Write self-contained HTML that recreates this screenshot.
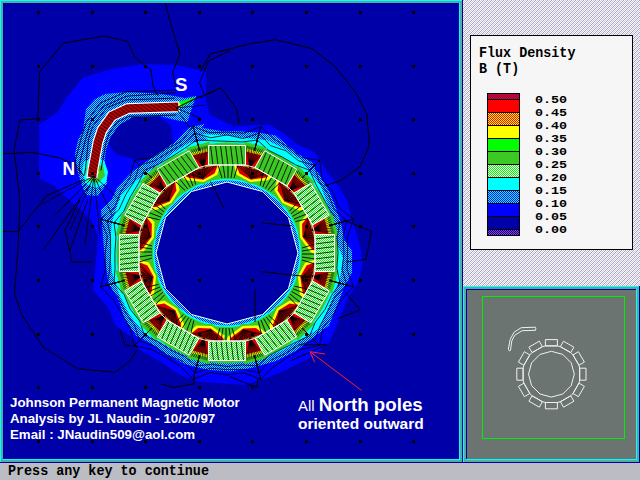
<!DOCTYPE html>
<html><head><meta charset="utf-8">
<style>
html,body{margin:0;padding:0;width:640px;height:480px;overflow:hidden;background:#c0c0c8}
svg{position:absolute;left:0;top:0;display:block}
.mono{font-family:"Liberation Mono",monospace;font-weight:bold}
.sans{font-family:"Liberation Sans",sans-serif;font-weight:bold}
</style></head><body>
<svg width="640" height="480" viewBox="0 0 640 480" shape-rendering="crispEdges">
<defs>
<pattern id="hatch" width="4" height="4" patternUnits="userSpaceOnUse">
<rect width="4" height="4" fill="#f8f8f8"/>
<rect x="1" y="0" width="1" height="1" fill="#c8d0d4"/><rect x="3" y="0" width="1" height="1" fill="#ac9cd0"/>
<rect x="0" y="1" width="1" height="1" fill="#c8d0d4"/><rect x="2" y="1" width="1" height="1" fill="#ac9cd0"/>
<rect x="1" y="2" width="1" height="1" fill="#ac9cd0"/><rect x="3" y="2" width="1" height="1" fill="#c8d0d4"/>
<rect x="0" y="3" width="1" height="1" fill="#ac9cd0"/><rect x="2" y="3" width="1" height="1" fill="#c8d0d4"/>
</pattern>
<pattern id="dCrim" width="2" height="2" patternUnits="userSpaceOnUse"><rect width="2" height="2" fill="#ff0000"/><rect x="1" y="0" width="1" height="1" fill="#701070"/><rect x="0" y="1" width="1" height="1" fill="#701070"/></pattern>
<pattern id="dOrg" width="2" height="2" patternUnits="userSpaceOnUse"><rect width="2" height="2" fill="#ff0000"/><rect x="1" y="0" width="1" height="1" fill="#ffff00"/><rect x="0" y="1" width="1" height="1" fill="#ffff00"/></pattern>
<pattern id="dMg" width="2" height="2" patternUnits="userSpaceOnUse"><rect width="2" height="2" fill="#00f000"/><rect x="1" y="0" width="1" height="1" fill="#78a048"/><rect x="0" y="1" width="1" height="1" fill="#78a048"/></pattern>
<pattern id="dLg" width="2" height="2" patternUnits="userSpaceOnUse"><rect width="2" height="2" fill="#00ff00"/><rect x="1" y="0" width="1" height="1" fill="#ffffff"/><rect x="0" y="1" width="1" height="1" fill="#ffffff"/></pattern>
<pattern id="dBl" width="2" height="2" patternUnits="userSpaceOnUse"><rect width="2" height="2" fill="#0000ff"/><rect x="1" y="0" width="1" height="1" fill="#00ffff"/><rect x="0" y="1" width="1" height="1" fill="#00ffff"/></pattern>
<pattern id="dPur" width="2" height="2" patternUnits="userSpaceOnUse"><rect width="2" height="2" fill="#0000a8"/><rect x="1" y="0" width="1" height="1" fill="#a040b0"/><rect x="0" y="1" width="1" height="1" fill="#a040b0"/></pattern>
</defs>
<!-- status bar -->
<rect x="0" y="463" width="640" height="17" fill="#bcbcc4"/>
<!-- right panel hatch -->
<rect x="463" y="0" width="177" height="286" fill="url(#hatch)"/>
<!-- main frame -->
<rect x="0" y="0" width="463" height="463" fill="#52aca0"/>
<rect x="0" y="0" width="462" height="1" fill="#00ffff"/>
<rect x="0" y="0" width="1" height="462" fill="#00ffff"/>
<rect x="3" y="3" width="456" height="456" fill="#0000a8"/>
<rect x="459" y="3" width="1" height="457" fill="#00ffff"/>
<rect x="3" y="459" width="457" height="1" fill="#00ffff"/>
<rect x="462" y="0" width="1" height="463" fill="#0000a0"/>
<rect x="0" y="462" width="463" height="1" fill="#0000a0"/>
<pattern id="arcHatch" width="3" height="3" patternUnits="userSpaceOnUse" patternTransform="rotate(35)"><rect width="3" height="3" fill="#700000"/><rect width="3" height="1" fill="#d00808"/></pattern>
<clipPath id="mainclip"><rect x="3" y="3" width="456" height="456"/></clipPath>
<g clip-path="url(#mainclip)" shape-rendering="auto">
<polygon points="82.5,78.0 90.0,75.2 112.0,69.0 142.8,64.0 175.3,65.0 199.7,70.0 206.0,72.0 206.0,100.0 210.0,115.0 234.5,126.7 252.0,125.0 270.0,125.0 285.0,134.0 296.8,144.5 314.6,152.0 326.5,171.0 338.4,186.0 347.3,201.0 351.7,218.7 355.6,230.0 361.0,251.0 362.7,265.4 357.4,283.0 346.8,300.8 339.7,318.5 329.0,343.0 311.4,357.4 286.6,369.8 265.4,378.6 244.0,385.0 220.0,383.0 200.0,382.0 180.0,375.0 161.0,362.0 140.0,350.0 133.0,338.0 115.4,325.5 108.3,307.8 93.0,290.0 95.0,272.0 97.0,250.0 98.0,236.0 91.0,220.0 79.6,208.8 65.9,197.3 54.4,186.0 40.6,179.0 38.8,175.0 39.5,140.0 38.8,125.0 57.5,112.5 66.9,96.9" fill="#0000ff"/>
<polygon points="104.0,122.0 110.0,115.0 130.0,114.0 157.5,116.0 171.0,126.0 173.0,143.0 164.0,157.0 140.0,161.0 116.0,154.0 106.0,141.0" fill="#0000a8"/>
<polygon points="83.0,130.6 86.0,108.8 95.0,99.0 105.0,94.0 127.0,92.0 158.0,93.5 173.8,96.0 185.0,98.0 196.0,96.0 192.0,108.0 187.5,122.0 175.0,120.0 160.0,116.0 133.0,117.0 119.0,125.0 110.0,138.0 106.0,150.0 104.0,165.0 107.0,174.4 107.0,183.6 98.0,196.0 86.5,195.0 82.0,186.0 77.3,169.8 75.0,153.8 78.0,140.0" fill="url(#dBl)"/>
<polygon points="84.0,162.0 92.0,158.0 104.0,160.0 108.0,172.0 106.0,183.0 96.0,188.0 86.0,184.0 82.0,172.0" fill="#00ffff"/>
<polygon points="86.0,168.0 93.0,164.0 103.0,166.0 105.0,176.0 98.0,183.0 89.0,181.0" fill="url(#dMg)"/>
<polygon points="88.0,170.0 94.0,168.0 99.0,172.0 96.0,178.0 90.0,177.0" fill="#ffff00"/>
<polygon points="201.9,128.0 204.8,128.2 222.6,131.2 237.5,131.2 258.0,132.6 276.0,135.6 288.0,146.0 299.8,155.0 311.7,162.3 320.6,177.0 329.5,192.0 335.4,206.8 341.3,224.6 344.3,240.0 352.0,251.0 352.0,272.5 343.2,290.0 336.0,307.8 329.0,325.5 315.0,336.0 297.0,350.3 276.0,361.0 251.2,368.0 230.0,371.5 207.4,369.8 186.0,364.5 165.0,353.8 150.8,343.2 136.6,336.0 124.2,318.5 119.0,300.8 108.3,283.0 104.8,258.3 103.0,237.0 101.0,210.0 111.7,199.6 117.5,187.0 133.0,171.0 155.0,155.6 173.8,143.0 189.0,127.5 205.0,124.0" fill="url(#dBl)"/>
<polygon points="201.9,134.0 228.6,135.6 249.3,138.6 267.0,140.0 285.0,149.0 299.8,159.3 311.7,174.0 320.6,186.0 326.5,201.0 332.4,218.7 335.4,240.0 343.2,258.3 339.7,279.5 332.6,297.2 325.5,315.0 318.5,329.0 300.8,339.7 283.0,350.3 265.4,357.4 244.0,361.0 230.0,362.7 203.8,359.2 182.6,353.8 161.4,343.2 143.7,332.6 129.5,315.0 119.0,293.7 112.0,272.5 110.0,251.0 111.7,222.5 120.6,196.0 136.0,180.6 158.0,165.0 173.8,152.5 189.0,143.0 208.0,140.0" fill="#00ffff"/>
<path d="M337.5,253.0 337.1,243.4 335.8,233.8 333.7,224.4 330.8,215.2 327.1,206.3 322.7,197.8 317.5,189.6 311.6,182.0 305.1,174.9 298.0,168.4 290.4,162.5 282.2,157.3 273.7,152.9 264.8,149.2 255.6,146.3 246.2,144.2 236.6,142.9 227.0,142.5 217.4,142.9 207.8,144.2 198.4,146.3 189.2,149.2 180.3,152.9 171.8,157.3 163.6,162.5 156.0,168.4 148.9,174.9 142.4,182.0 136.5,189.6 131.3,197.8 126.9,206.3 123.2,215.2 120.3,224.4 118.2,233.8 116.9,243.4 116.5,253.0 116.9,262.6 118.2,272.2 120.3,281.6 123.2,290.8 126.9,299.7 131.3,308.2 136.5,316.4 142.4,324.0 148.9,331.1 156.0,337.6 163.6,343.5 171.7,348.7 180.3,353.1 189.2,356.8 198.4,359.7 207.8,361.8 217.4,363.1 227.0,363.5 236.6,363.1 246.2,361.8 255.6,359.7 264.8,356.8 273.7,353.1 282.2,348.7 290.4,343.5 298.0,337.6 305.1,331.1 311.6,324.0 317.5,316.4 322.7,308.3 327.1,299.7 330.8,290.8 333.7,281.6 335.8,272.2 337.1,262.6Z M288.5,288.5 262.5,314.5 227.0,324.0 191.5,314.5 165.5,288.5 156.0,253.0 165.5,217.5 191.5,191.5 227.0,182.0 262.5,191.5 288.5,217.5 298.0,253.0Z" fill="url(#dMg)" fill-rule="evenodd"/>
<path d="M301.0,253.0 300.7,246.6 299.9,240.2 298.5,233.8 296.5,227.7 294.1,221.7 291.1,216.0 287.6,210.6 283.7,205.4 279.3,200.7 274.6,196.3 269.4,192.4 264.0,188.9 258.3,185.9 252.3,183.5 246.2,181.5 239.8,180.1 233.4,179.3 227.0,179.0 220.6,179.3 214.2,180.1 207.8,181.5 201.7,183.5 195.7,185.9 190.0,188.9 184.6,192.4 179.4,196.3 174.7,200.7 170.3,205.4 166.4,210.6 162.9,216.0 159.9,221.7 157.5,227.7 155.5,233.8 154.1,240.2 153.3,246.6 153.0,253.0 153.3,259.4 154.1,265.8 155.5,272.2 157.5,278.3 159.9,284.3 162.9,290.0 166.4,295.4 170.3,300.6 174.7,305.3 179.4,309.7 184.6,313.6 190.0,317.1 195.7,320.1 201.7,322.5 207.8,324.5 214.2,325.9 220.6,326.7 227.0,327.0 233.4,326.7 239.8,325.9 246.2,324.5 252.3,322.5 258.3,320.1 264.0,317.1 269.4,313.6 274.6,309.7 279.3,305.3 283.7,300.6 287.6,295.4 291.1,290.0 294.1,284.3 296.5,278.3 298.5,272.2 299.9,265.8 300.7,259.4Z M288.5,288.5 262.5,314.5 227.0,324.0 191.5,314.5 165.5,288.5 156.0,253.0 165.5,217.5 191.5,191.5 227.0,182.0 262.5,191.5 288.5,217.5 298.0,253.0Z" fill="#00ffff" fill-rule="evenodd"/>
<path d="M299.5,253.0 299.2,246.7 298.4,240.4 297.0,234.2 295.1,228.2 292.7,222.4 289.8,216.8 286.4,211.4 282.5,206.4 278.3,201.7 273.6,197.5 268.6,193.6 263.2,190.2 257.6,187.3 251.8,184.9 245.8,183.0 239.6,181.6 233.3,180.8 227.0,180.5 220.7,180.8 214.4,181.6 208.2,183.0 202.2,184.9 196.4,187.3 190.8,190.2 185.4,193.6 180.4,197.5 175.7,201.7 171.5,206.4 167.6,211.4 164.2,216.8 161.3,222.4 158.9,228.2 157.0,234.2 155.6,240.4 154.8,246.7 154.5,253.0 154.8,259.3 155.6,265.6 157.0,271.8 158.9,277.8 161.3,283.6 164.2,289.2 167.6,294.6 171.5,299.6 175.7,304.3 180.4,308.5 185.4,312.4 190.7,315.8 196.4,318.7 202.2,321.1 208.2,323.0 214.4,324.4 220.7,325.2 227.0,325.5 233.3,325.2 239.6,324.4 245.8,323.0 251.8,321.1 257.6,318.7 263.2,315.8 268.6,312.4 273.6,308.5 278.3,304.3 282.5,299.6 286.4,294.6 289.8,289.3 292.7,283.6 295.1,277.8 297.0,271.8 298.4,265.6 299.2,259.3Z M288.5,288.5 262.5,314.5 227.0,324.0 191.5,314.5 165.5,288.5 156.0,253.0 165.5,217.5 191.5,191.5 227.0,182.0 262.5,191.5 288.5,217.5 298.0,253.0Z" fill="url(#dBl)" fill-rule="evenodd"/>
<polygon points="298.0,253.0 288.5,217.5 262.5,191.5 227.0,182.0 191.5,191.5 165.5,217.5 156.0,253.0 165.5,288.5 191.5,314.5 227.0,324.0 262.5,314.5 288.5,288.5" fill="#0000a8"/>
<polygon points="306.8,210.9 319.5,258.2 310.5,255.5 298.1,238.1 298.0,220.5" fill="url(#dMg)"/>
<polygon points="307.6,213.8 318.7,255.3 310.7,252.3 300.0,237.6 299.5,222.2" fill="#ffff00"/>
<polygon points="308.2,216.2 318.0,252.4 311.8,248.9 302.4,236.9 302.1,224.1" fill="#d00000"/>
<polygon points="310.4,224.4 315.6,243.7 306.3,235.9" fill="#780000"/>
<polygon points="338.3,235.6 332.1,212.4 313.8,221.5 312.0,230.2 317.9,236.9" fill="url(#dMg)"/>
<polygon points="331.7,234.3 327.1,216.9 312.4,223.9 312.0,230.2 315.5,235.5" fill="#ffff00"/>
<polygon points="328.6,234.1 324.4,218.6 312.5,224.4 312.0,230.2 315.4,235.0" fill="#d80000"/>
<polygon points="320.5,231.1 319.0,225.3 312.7,229.0 313.2,230.9" fill="#400000"/>
<line x1="312.5" y1="230.1" x2="334.8" y2="234.4" stroke="#000" stroke-width="0.7"/>
<line x1="312.5" y1="230.1" x2="334.3" y2="232.2" stroke="#000" stroke-width="0.7"/>
<line x1="312.5" y1="230.1" x2="333.7" y2="230.1" stroke="#000" stroke-width="0.7"/>
<line x1="312.5" y1="230.1" x2="333.1" y2="228.0" stroke="#000" stroke-width="0.7"/>
<line x1="312.5" y1="230.1" x2="332.6" y2="225.9" stroke="#000" stroke-width="0.7"/>
<line x1="312.5" y1="230.1" x2="332.0" y2="223.7" stroke="#000" stroke-width="0.7"/>
<line x1="312.5" y1="230.1" x2="331.4" y2="221.6" stroke="#000" stroke-width="0.7"/>
<line x1="312.5" y1="230.1" x2="330.9" y2="219.5" stroke="#000" stroke-width="0.7"/>
<line x1="312.5" y1="230.1" x2="330.3" y2="217.4" stroke="#000" stroke-width="0.7"/>
<line x1="312.5" y1="230.1" x2="329.7" y2="215.2" stroke="#000" stroke-width="0.7"/>
<line x1="303.9" y1="236.5" x2="308.2" y2="217.8" stroke="#000" stroke-width="0.7"/>
<line x1="303.9" y1="236.5" x2="308.9" y2="220.7" stroke="#000" stroke-width="0.7"/>
<line x1="303.9" y1="236.5" x2="309.7" y2="223.6" stroke="#000" stroke-width="0.7"/>
<line x1="303.9" y1="236.5" x2="310.5" y2="226.5" stroke="#000" stroke-width="0.7"/>
<line x1="303.9" y1="236.5" x2="311.3" y2="229.4" stroke="#000" stroke-width="0.7"/>
<line x1="303.9" y1="236.5" x2="312.0" y2="232.3" stroke="#000" stroke-width="0.7"/>
<line x1="303.9" y1="236.5" x2="312.8" y2="235.2" stroke="#000" stroke-width="0.7"/>
<line x1="303.9" y1="236.5" x2="313.6" y2="238.1" stroke="#000" stroke-width="0.7"/>
<line x1="303.9" y1="236.5" x2="314.4" y2="241.0" stroke="#000" stroke-width="0.7"/>
<line x1="303.9" y1="236.5" x2="315.1" y2="243.9" stroke="#000" stroke-width="0.7"/>
<line x1="303.9" y1="236.5" x2="315.9" y2="246.8" stroke="#000" stroke-width="0.7"/>
<line x1="303.9" y1="236.5" x2="316.7" y2="249.7" stroke="#000" stroke-width="0.7"/>
<polyline points="329.4,225.6 340.0,222.7 330.4,211.2 323.1,197.5 315.6,183.8 309.7,170.3 302.0,178.0" fill="none" stroke="#000" stroke-width="0.8"/>
<polyline points="329.4,225.6 346.8,220.9 334.3,209.7 328.4,194.4 318.9,181.2 314.7,165.3 302.0,178.0" fill="none" stroke="#000" stroke-width="0.8"/>
<polyline points="329.4,225.6 353.5,219.1 338.9,207.8 332.7,192.0 322.0,178.7 319.6,160.4 302.0,178.0" fill="none" stroke="#000" stroke-width="0.8"/>
<polygon points="275.1,176.6 309.7,211.3 300.5,213.4 281.1,204.6 272.3,189.4" fill="url(#dMg)"/>
<polygon points="277.2,178.8 307.6,209.2 299.1,210.6 282.5,203.1 274.4,190.1" fill="#ffff00"/>
<polygon points="279.0,180.5 305.5,207.0 298.4,207.0 284.3,201.4 277.6,190.4" fill="#d00000"/>
<polygon points="285.0,186.5 299.1,200.7 287.1,198.6" fill="#780000"/>
<polygon points="314.7,182.3 297.7,165.3 286.4,182.3 289.2,190.8 297.7,193.6" fill="url(#dMg)"/>
<polygon points="308.3,184.4 295.6,171.7 286.4,185.1 289.2,190.8 294.9,193.6" fill="#ffff00"/>
<polygon points="305.5,185.8 294.2,174.5 286.8,185.5 289.2,190.8 294.5,193.2" fill="#d80000"/>
<polygon points="297.0,187.2 292.8,183.0 289.2,189.4 290.6,190.8" fill="#400000"/>
<line x1="289.6" y1="190.4" x2="311.1" y2="182.9" stroke="#000" stroke-width="0.7"/>
<line x1="289.6" y1="190.4" x2="309.5" y2="181.4" stroke="#000" stroke-width="0.7"/>
<line x1="289.6" y1="190.4" x2="308.0" y2="179.8" stroke="#000" stroke-width="0.7"/>
<line x1="289.6" y1="190.4" x2="306.4" y2="178.3" stroke="#000" stroke-width="0.7"/>
<line x1="289.6" y1="190.4" x2="304.9" y2="176.7" stroke="#000" stroke-width="0.7"/>
<line x1="289.6" y1="190.4" x2="303.3" y2="175.1" stroke="#000" stroke-width="0.7"/>
<line x1="289.6" y1="190.4" x2="301.7" y2="173.6" stroke="#000" stroke-width="0.7"/>
<line x1="289.6" y1="190.4" x2="300.2" y2="172.0" stroke="#000" stroke-width="0.7"/>
<line x1="289.6" y1="190.4" x2="298.6" y2="170.5" stroke="#000" stroke-width="0.7"/>
<line x1="289.6" y1="190.4" x2="297.1" y2="168.9" stroke="#000" stroke-width="0.7"/>
<line x1="285.3" y1="200.3" x2="279.7" y2="181.9" stroke="#000" stroke-width="0.7"/>
<line x1="285.3" y1="200.3" x2="281.8" y2="184.1" stroke="#000" stroke-width="0.7"/>
<line x1="285.3" y1="200.3" x2="283.9" y2="186.2" stroke="#000" stroke-width="0.7"/>
<line x1="285.3" y1="200.3" x2="286.0" y2="188.3" stroke="#000" stroke-width="0.7"/>
<line x1="285.3" y1="200.3" x2="288.2" y2="190.4" stroke="#000" stroke-width="0.7"/>
<line x1="285.3" y1="200.3" x2="290.3" y2="192.5" stroke="#000" stroke-width="0.7"/>
<line x1="285.3" y1="200.3" x2="292.4" y2="194.7" stroke="#000" stroke-width="0.7"/>
<line x1="285.3" y1="200.3" x2="294.5" y2="196.8" stroke="#000" stroke-width="0.7"/>
<line x1="285.3" y1="200.3" x2="296.7" y2="198.9" stroke="#000" stroke-width="0.7"/>
<line x1="285.3" y1="200.3" x2="298.8" y2="201.0" stroke="#000" stroke-width="0.7"/>
<line x1="285.3" y1="200.3" x2="300.9" y2="203.1" stroke="#000" stroke-width="0.7"/>
<line x1="285.3" y1="200.3" x2="303.0" y2="205.3" stroke="#000" stroke-width="0.7"/>
<polyline points="302.0,178.0 309.7,170.3 295.8,164.9 282.4,157.1 268.5,150.3 257.3,140.0 254.4,150.6" fill="none" stroke="#000" stroke-width="0.8"/>
<polyline points="302.0,178.0 314.7,165.3 298.9,161.0 286.0,150.8 270.4,145.6 259.1,133.2 254.4,150.6" fill="none" stroke="#000" stroke-width="0.8"/>
<polyline points="302.0,178.0 319.6,160.4 301.6,157.5 288.2,147.0 273.2,138.6 260.9,126.5 254.4,150.6" fill="none" stroke="#000" stroke-width="0.8"/>
<polygon points="230.5,162.8 277.8,175.5 270.9,181.9 249.6,184.0 234.4,175.3" fill="url(#dMg)"/>
<polygon points="233.4,163.6 274.9,174.7 268.2,180.2 250.1,182.1 236.6,174.8" fill="#ffff00"/>
<polygon points="235.8,164.2 272.0,174.0 265.9,177.5 250.8,179.7 239.5,173.5" fill="#d00000"/>
<polygon points="244.0,166.4 263.3,171.6 251.8,175.8" fill="#780000"/>
<polygon points="267.6,147.9 244.4,141.7 243.1,162.1 249.8,168.0 258.5,166.2" fill="url(#dMg)"/>
<polygon points="263.1,152.9 245.7,148.3 244.5,164.5 249.8,168.0 256.1,167.6" fill="#ffff00"/>
<polygon points="261.4,155.6 245.9,151.4 245.0,164.6 249.8,168.0 255.6,167.5" fill="#d80000"/>
<polygon points="254.7,161.0 248.9,159.5 249.1,166.8 251.0,167.3" fill="#400000"/>
<line x1="249.9" y1="167.5" x2="264.8" y2="150.3" stroke="#000" stroke-width="0.7"/>
<line x1="249.9" y1="167.5" x2="262.6" y2="149.7" stroke="#000" stroke-width="0.7"/>
<line x1="249.9" y1="167.5" x2="260.5" y2="149.1" stroke="#000" stroke-width="0.7"/>
<line x1="249.9" y1="167.5" x2="258.4" y2="148.6" stroke="#000" stroke-width="0.7"/>
<line x1="249.9" y1="167.5" x2="256.3" y2="148.0" stroke="#000" stroke-width="0.7"/>
<line x1="249.9" y1="167.5" x2="254.1" y2="147.4" stroke="#000" stroke-width="0.7"/>
<line x1="249.9" y1="167.5" x2="252.0" y2="146.9" stroke="#000" stroke-width="0.7"/>
<line x1="249.9" y1="167.5" x2="249.9" y2="146.3" stroke="#000" stroke-width="0.7"/>
<line x1="249.9" y1="167.5" x2="247.8" y2="145.7" stroke="#000" stroke-width="0.7"/>
<line x1="249.9" y1="167.5" x2="245.6" y2="145.2" stroke="#000" stroke-width="0.7"/>
<line x1="251.2" y1="178.2" x2="237.1" y2="165.1" stroke="#000" stroke-width="0.7"/>
<line x1="251.2" y1="178.2" x2="240.0" y2="165.9" stroke="#000" stroke-width="0.7"/>
<line x1="251.2" y1="178.2" x2="242.9" y2="166.7" stroke="#000" stroke-width="0.7"/>
<line x1="251.2" y1="178.2" x2="245.8" y2="167.4" stroke="#000" stroke-width="0.7"/>
<line x1="251.2" y1="178.2" x2="248.7" y2="168.2" stroke="#000" stroke-width="0.7"/>
<line x1="251.2" y1="178.2" x2="251.6" y2="169.0" stroke="#000" stroke-width="0.7"/>
<line x1="251.2" y1="178.2" x2="254.5" y2="169.8" stroke="#000" stroke-width="0.7"/>
<line x1="251.2" y1="178.2" x2="257.4" y2="170.6" stroke="#000" stroke-width="0.7"/>
<line x1="251.2" y1="178.2" x2="260.3" y2="171.3" stroke="#000" stroke-width="0.7"/>
<line x1="251.2" y1="178.2" x2="263.2" y2="172.1" stroke="#000" stroke-width="0.7"/>
<line x1="251.2" y1="178.2" x2="266.1" y2="172.9" stroke="#000" stroke-width="0.7"/>
<line x1="251.2" y1="178.2" x2="269.0" y2="173.7" stroke="#000" stroke-width="0.7"/>
<polyline points="254.4,150.6 257.3,140.0 242.6,141.9 227.0,141.3 211.2,140.7 196.7,140.0 199.6,150.6" fill="none" stroke="#000" stroke-width="0.8"/>
<polyline points="254.4,150.6 259.1,133.2 243.1,138.5 227.0,134.9 210.8,137.8 194.9,133.2 199.6,150.6" fill="none" stroke="#000" stroke-width="0.8"/>
<polyline points="254.4,150.6 260.9,126.5 243.8,133.2 227.0,132.1 210.1,132.8 193.1,126.5 199.6,150.6" fill="none" stroke="#000" stroke-width="0.8"/>
<polygon points="223.5,162.8 176.2,175.5 183.1,181.9 204.4,184.0 219.6,175.3" fill="url(#dMg)"/>
<polygon points="220.6,163.6 179.1,174.7 185.8,180.2 203.9,182.1 217.4,174.8" fill="#ffff00"/>
<polygon points="218.2,164.2 182.0,174.0 188.1,177.5 203.2,179.7 214.5,173.5" fill="#d00000"/>
<polygon points="210.0,166.4 190.7,171.6 202.2,175.8" fill="#780000"/>
<polygon points="209.6,141.7 186.4,147.9 195.5,166.2 204.2,168.0 210.9,162.1" fill="url(#dMg)"/>
<polygon points="208.3,148.3 190.9,152.9 197.9,167.6 204.2,168.0 209.5,164.5" fill="#ffff00"/>
<polygon points="208.1,151.4 192.6,155.6 198.4,167.5 204.2,168.0 209.0,164.6" fill="#d80000"/>
<polygon points="205.1,159.5 199.3,161.0 203.0,167.3 204.9,166.8" fill="#400000"/>
<line x1="204.1" y1="167.5" x2="208.4" y2="145.2" stroke="#000" stroke-width="0.7"/>
<line x1="204.1" y1="167.5" x2="206.2" y2="145.7" stroke="#000" stroke-width="0.7"/>
<line x1="204.1" y1="167.5" x2="204.1" y2="146.3" stroke="#000" stroke-width="0.7"/>
<line x1="204.1" y1="167.5" x2="202.0" y2="146.9" stroke="#000" stroke-width="0.7"/>
<line x1="204.1" y1="167.5" x2="199.9" y2="147.4" stroke="#000" stroke-width="0.7"/>
<line x1="204.1" y1="167.5" x2="197.7" y2="148.0" stroke="#000" stroke-width="0.7"/>
<line x1="204.1" y1="167.5" x2="195.6" y2="148.6" stroke="#000" stroke-width="0.7"/>
<line x1="204.1" y1="167.5" x2="193.5" y2="149.1" stroke="#000" stroke-width="0.7"/>
<line x1="204.1" y1="167.5" x2="191.4" y2="149.7" stroke="#000" stroke-width="0.7"/>
<line x1="204.1" y1="167.5" x2="189.2" y2="150.3" stroke="#000" stroke-width="0.7"/>
<line x1="202.8" y1="178.2" x2="216.9" y2="165.1" stroke="#000" stroke-width="0.7"/>
<line x1="202.8" y1="178.2" x2="214.0" y2="165.9" stroke="#000" stroke-width="0.7"/>
<line x1="202.8" y1="178.2" x2="211.1" y2="166.7" stroke="#000" stroke-width="0.7"/>
<line x1="202.8" y1="178.2" x2="208.2" y2="167.4" stroke="#000" stroke-width="0.7"/>
<line x1="202.8" y1="178.2" x2="205.3" y2="168.2" stroke="#000" stroke-width="0.7"/>
<line x1="202.8" y1="178.2" x2="202.4" y2="169.0" stroke="#000" stroke-width="0.7"/>
<line x1="202.8" y1="178.2" x2="199.5" y2="169.8" stroke="#000" stroke-width="0.7"/>
<line x1="202.8" y1="178.2" x2="196.6" y2="170.6" stroke="#000" stroke-width="0.7"/>
<line x1="202.8" y1="178.2" x2="193.7" y2="171.3" stroke="#000" stroke-width="0.7"/>
<line x1="202.8" y1="178.2" x2="190.8" y2="172.1" stroke="#000" stroke-width="0.7"/>
<line x1="202.8" y1="178.2" x2="187.9" y2="172.9" stroke="#000" stroke-width="0.7"/>
<line x1="202.8" y1="178.2" x2="185.0" y2="173.7" stroke="#000" stroke-width="0.7"/>
<polyline points="199.6,150.6 196.7,140.0 184.7,148.3 171.5,156.8 157.9,164.5 144.3,170.3 152.0,178.0" fill="none" stroke="#000" stroke-width="0.8"/>
<polyline points="199.6,150.6 194.9,133.2 183.0,144.1 168.7,152.0 154.9,160.7 139.3,165.3 152.0,178.0" fill="none" stroke="#000" stroke-width="0.8"/>
<polyline points="199.6,150.6 193.1,126.5 181.8,141.1 166.7,148.5 152.4,157.6 134.4,160.4 152.0,178.0" fill="none" stroke="#000" stroke-width="0.8"/>
<polygon points="178.9,176.6 144.3,211.3 153.5,213.4 172.9,204.6 181.7,189.4" fill="url(#dMg)"/>
<polygon points="176.8,178.8 146.4,209.2 154.9,210.6 171.5,203.1 179.6,190.1" fill="#ffff00"/>
<polygon points="175.0,180.5 148.5,207.0 155.6,207.0 169.7,201.4 176.4,190.4" fill="#d00000"/>
<polygon points="169.0,186.5 154.9,200.7 166.9,198.6" fill="#780000"/>
<polygon points="156.3,165.3 139.3,182.3 156.3,193.6 164.8,190.8 167.6,182.3" fill="url(#dMg)"/>
<polygon points="158.4,171.7 145.7,184.4 159.1,193.6 164.8,190.8 167.6,185.1" fill="#ffff00"/>
<polygon points="159.8,174.5 148.5,185.8 159.5,193.2 164.8,190.8 167.2,185.5" fill="#d80000"/>
<polygon points="161.2,183.0 157.0,187.2 163.4,190.8 164.8,189.4" fill="#400000"/>
<line x1="164.4" y1="190.4" x2="156.9" y2="168.9" stroke="#000" stroke-width="0.7"/>
<line x1="164.4" y1="190.4" x2="155.4" y2="170.5" stroke="#000" stroke-width="0.7"/>
<line x1="164.4" y1="190.4" x2="153.8" y2="172.0" stroke="#000" stroke-width="0.7"/>
<line x1="164.4" y1="190.4" x2="152.3" y2="173.6" stroke="#000" stroke-width="0.7"/>
<line x1="164.4" y1="190.4" x2="150.7" y2="175.1" stroke="#000" stroke-width="0.7"/>
<line x1="164.4" y1="190.4" x2="149.1" y2="176.7" stroke="#000" stroke-width="0.7"/>
<line x1="164.4" y1="190.4" x2="147.6" y2="178.3" stroke="#000" stroke-width="0.7"/>
<line x1="164.4" y1="190.4" x2="146.0" y2="179.8" stroke="#000" stroke-width="0.7"/>
<line x1="164.4" y1="190.4" x2="144.5" y2="181.4" stroke="#000" stroke-width="0.7"/>
<line x1="164.4" y1="190.4" x2="142.9" y2="182.9" stroke="#000" stroke-width="0.7"/>
<line x1="168.7" y1="200.3" x2="174.3" y2="181.9" stroke="#000" stroke-width="0.7"/>
<line x1="168.7" y1="200.3" x2="172.2" y2="184.1" stroke="#000" stroke-width="0.7"/>
<line x1="168.7" y1="200.3" x2="170.1" y2="186.2" stroke="#000" stroke-width="0.7"/>
<line x1="168.7" y1="200.3" x2="168.0" y2="188.3" stroke="#000" stroke-width="0.7"/>
<line x1="168.7" y1="200.3" x2="165.8" y2="190.4" stroke="#000" stroke-width="0.7"/>
<line x1="168.7" y1="200.3" x2="163.7" y2="192.5" stroke="#000" stroke-width="0.7"/>
<line x1="168.7" y1="200.3" x2="161.6" y2="194.7" stroke="#000" stroke-width="0.7"/>
<line x1="168.7" y1="200.3" x2="159.5" y2="196.8" stroke="#000" stroke-width="0.7"/>
<line x1="168.7" y1="200.3" x2="157.3" y2="198.9" stroke="#000" stroke-width="0.7"/>
<line x1="168.7" y1="200.3" x2="155.2" y2="201.0" stroke="#000" stroke-width="0.7"/>
<line x1="168.7" y1="200.3" x2="153.1" y2="203.1" stroke="#000" stroke-width="0.7"/>
<line x1="168.7" y1="200.3" x2="151.0" y2="205.3" stroke="#000" stroke-width="0.7"/>
<polyline points="152.0,178.0 144.3,170.3 138.3,183.7 130.2,197.1 123.7,211.3 114.0,222.7 124.6,225.6" fill="none" stroke="#000" stroke-width="0.8"/>
<polyline points="152.0,178.0 139.3,165.3 134.6,180.8 125.8,194.6 119.1,209.4 107.2,220.9 124.6,225.6" fill="none" stroke="#000" stroke-width="0.8"/>
<polyline points="152.0,178.0 134.4,160.4 130.2,177.3 120.8,191.7 114.6,207.6 100.5,219.1 124.6,225.6" fill="none" stroke="#000" stroke-width="0.8"/>
<polygon points="147.2,210.9 134.5,258.2 143.5,255.5 155.9,238.1 156.0,220.5" fill="url(#dMg)"/>
<polygon points="146.4,213.8 135.3,255.3 143.3,252.3 154.0,237.6 154.5,222.2" fill="#ffff00"/>
<polygon points="145.8,216.2 136.0,252.4 142.2,248.9 151.6,236.9 151.9,224.1" fill="#d00000"/>
<polygon points="143.6,224.4 138.4,243.7 147.7,235.9" fill="#780000"/>
<polygon points="121.9,212.4 115.7,235.6 136.1,236.9 142.0,230.2 140.2,221.5" fill="url(#dMg)"/>
<polygon points="126.9,216.9 122.3,234.3 138.5,235.5 142.0,230.2 141.6,223.9" fill="#ffff00"/>
<polygon points="129.6,218.6 125.4,234.1 138.6,235.0 142.0,230.2 141.5,224.4" fill="#d80000"/>
<polygon points="135.0,225.3 133.5,231.1 140.8,230.9 141.3,229.0" fill="#400000"/>
<line x1="141.5" y1="230.1" x2="124.3" y2="215.2" stroke="#000" stroke-width="0.7"/>
<line x1="141.5" y1="230.1" x2="123.7" y2="217.4" stroke="#000" stroke-width="0.7"/>
<line x1="141.5" y1="230.1" x2="123.1" y2="219.5" stroke="#000" stroke-width="0.7"/>
<line x1="141.5" y1="230.1" x2="122.6" y2="221.6" stroke="#000" stroke-width="0.7"/>
<line x1="141.5" y1="230.1" x2="122.0" y2="223.7" stroke="#000" stroke-width="0.7"/>
<line x1="141.5" y1="230.1" x2="121.4" y2="225.9" stroke="#000" stroke-width="0.7"/>
<line x1="141.5" y1="230.1" x2="120.9" y2="228.0" stroke="#000" stroke-width="0.7"/>
<line x1="141.5" y1="230.1" x2="120.3" y2="230.1" stroke="#000" stroke-width="0.7"/>
<line x1="141.5" y1="230.1" x2="119.7" y2="232.2" stroke="#000" stroke-width="0.7"/>
<line x1="141.5" y1="230.1" x2="119.2" y2="234.4" stroke="#000" stroke-width="0.7"/>
<line x1="150.1" y1="236.5" x2="145.8" y2="217.8" stroke="#000" stroke-width="0.7"/>
<line x1="150.1" y1="236.5" x2="145.1" y2="220.7" stroke="#000" stroke-width="0.7"/>
<line x1="150.1" y1="236.5" x2="144.3" y2="223.6" stroke="#000" stroke-width="0.7"/>
<line x1="150.1" y1="236.5" x2="143.5" y2="226.5" stroke="#000" stroke-width="0.7"/>
<line x1="150.1" y1="236.5" x2="142.7" y2="229.4" stroke="#000" stroke-width="0.7"/>
<line x1="150.1" y1="236.5" x2="142.0" y2="232.3" stroke="#000" stroke-width="0.7"/>
<line x1="150.1" y1="236.5" x2="141.2" y2="235.2" stroke="#000" stroke-width="0.7"/>
<line x1="150.1" y1="236.5" x2="140.4" y2="238.1" stroke="#000" stroke-width="0.7"/>
<line x1="150.1" y1="236.5" x2="139.6" y2="241.0" stroke="#000" stroke-width="0.7"/>
<line x1="150.1" y1="236.5" x2="138.9" y2="243.9" stroke="#000" stroke-width="0.7"/>
<line x1="150.1" y1="236.5" x2="138.1" y2="246.8" stroke="#000" stroke-width="0.7"/>
<line x1="150.1" y1="236.5" x2="137.3" y2="249.7" stroke="#000" stroke-width="0.7"/>
<polyline points="124.6,225.6 114.0,222.7 115.9,237.4 114.9,253.0 115.0,268.7 114.0,283.3 124.6,280.4" fill="none" stroke="#000" stroke-width="0.8"/>
<polyline points="124.6,225.6 107.2,220.9 110.5,236.6 110.6,253.0 109.7,269.5 107.2,285.1 124.6,280.4" fill="none" stroke="#000" stroke-width="0.8"/>
<polyline points="124.6,225.6 100.5,219.1 107.3,236.2 105.2,253.0 105.4,270.1 100.5,286.9 124.6,280.4" fill="none" stroke="#000" stroke-width="0.8"/>
<polygon points="136.8,256.5 149.5,303.8 155.9,296.9 158.0,275.6 149.3,260.4" fill="url(#dMg)"/>
<polygon points="137.6,259.4 148.7,300.9 154.2,294.2 156.1,276.1 148.8,262.6" fill="#ffff00"/>
<polygon points="138.2,261.8 148.0,298.0 151.5,291.9 153.7,276.8 147.5,265.5" fill="#d00000"/>
<polygon points="140.4,270.0 145.6,289.3 149.8,277.8" fill="#780000"/>
<polygon points="115.7,270.4 121.9,293.6 140.2,284.5 142.0,275.8 136.1,269.1" fill="url(#dMg)"/>
<polygon points="122.3,271.7 126.9,289.1 141.6,282.1 142.0,275.8 138.5,270.5" fill="#ffff00"/>
<polygon points="125.4,271.9 129.6,287.4 141.5,281.6 142.0,275.8 138.6,271.0" fill="#d80000"/>
<polygon points="133.5,274.9 135.0,280.7 141.3,277.0 140.8,275.1" fill="#400000"/>
<line x1="141.5" y1="275.9" x2="119.2" y2="271.6" stroke="#000" stroke-width="0.7"/>
<line x1="141.5" y1="275.9" x2="119.7" y2="273.8" stroke="#000" stroke-width="0.7"/>
<line x1="141.5" y1="275.9" x2="120.3" y2="275.9" stroke="#000" stroke-width="0.7"/>
<line x1="141.5" y1="275.9" x2="120.9" y2="278.0" stroke="#000" stroke-width="0.7"/>
<line x1="141.5" y1="275.9" x2="121.4" y2="280.1" stroke="#000" stroke-width="0.7"/>
<line x1="141.5" y1="275.9" x2="122.0" y2="282.3" stroke="#000" stroke-width="0.7"/>
<line x1="141.5" y1="275.9" x2="122.6" y2="284.4" stroke="#000" stroke-width="0.7"/>
<line x1="141.5" y1="275.9" x2="123.1" y2="286.5" stroke="#000" stroke-width="0.7"/>
<line x1="141.5" y1="275.9" x2="123.7" y2="288.6" stroke="#000" stroke-width="0.7"/>
<line x1="141.5" y1="275.9" x2="124.3" y2="290.8" stroke="#000" stroke-width="0.7"/>
<line x1="152.2" y1="277.2" x2="139.1" y2="263.1" stroke="#000" stroke-width="0.7"/>
<line x1="152.2" y1="277.2" x2="139.9" y2="266.0" stroke="#000" stroke-width="0.7"/>
<line x1="152.2" y1="277.2" x2="140.7" y2="268.9" stroke="#000" stroke-width="0.7"/>
<line x1="152.2" y1="277.2" x2="141.4" y2="271.8" stroke="#000" stroke-width="0.7"/>
<line x1="152.2" y1="277.2" x2="142.2" y2="274.7" stroke="#000" stroke-width="0.7"/>
<line x1="152.2" y1="277.2" x2="143.0" y2="277.6" stroke="#000" stroke-width="0.7"/>
<line x1="152.2" y1="277.2" x2="143.8" y2="280.5" stroke="#000" stroke-width="0.7"/>
<line x1="152.2" y1="277.2" x2="144.6" y2="283.4" stroke="#000" stroke-width="0.7"/>
<line x1="152.2" y1="277.2" x2="145.3" y2="286.3" stroke="#000" stroke-width="0.7"/>
<line x1="152.2" y1="277.2" x2="146.1" y2="289.2" stroke="#000" stroke-width="0.7"/>
<line x1="152.2" y1="277.2" x2="146.9" y2="292.1" stroke="#000" stroke-width="0.7"/>
<line x1="152.2" y1="277.2" x2="147.7" y2="295.0" stroke="#000" stroke-width="0.7"/>
<polyline points="124.6,280.4 114.0,283.3 124.1,294.6 130.0,309.0 139.8,321.1 144.3,335.7 152.0,328.0" fill="none" stroke="#000" stroke-width="0.8"/>
<polyline points="124.6,280.4 107.2,285.1 118.1,297.0 125.0,311.9 134.6,325.2 139.3,340.7 152.0,328.0" fill="none" stroke="#000" stroke-width="0.8"/>
<polyline points="124.6,280.4 100.5,286.9 112.8,299.1 121.8,313.7 130.4,328.5 134.4,345.6 152.0,328.0" fill="none" stroke="#000" stroke-width="0.8"/>
<polygon points="150.6,301.1 185.3,335.7 187.4,326.5 178.6,307.1 163.4,298.3" fill="url(#dMg)"/>
<polygon points="152.8,303.2 183.2,333.6 184.6,325.1 177.1,308.5 164.1,300.4" fill="#ffff00"/>
<polygon points="154.5,305.0 181.0,331.5 181.0,324.4 175.4,310.3 164.4,303.6" fill="#d00000"/>
<polygon points="160.5,311.0 174.7,325.1 172.6,313.1" fill="#780000"/>
<polygon points="139.3,323.7 156.3,340.7 167.6,323.7 164.8,315.2 156.3,312.4" fill="url(#dMg)"/>
<polygon points="145.7,321.6 158.4,334.3 167.6,320.9 164.8,315.2 159.1,312.4" fill="#ffff00"/>
<polygon points="148.5,320.2 159.8,331.5 167.2,320.5 164.8,315.2 159.5,312.8" fill="#d80000"/>
<polygon points="157.0,318.8 161.2,323.0 164.8,316.6 163.4,315.2" fill="#400000"/>
<line x1="164.4" y1="315.6" x2="142.9" y2="323.1" stroke="#000" stroke-width="0.7"/>
<line x1="164.4" y1="315.6" x2="144.5" y2="324.6" stroke="#000" stroke-width="0.7"/>
<line x1="164.4" y1="315.6" x2="146.0" y2="326.2" stroke="#000" stroke-width="0.7"/>
<line x1="164.4" y1="315.6" x2="147.6" y2="327.7" stroke="#000" stroke-width="0.7"/>
<line x1="164.4" y1="315.6" x2="149.1" y2="329.3" stroke="#000" stroke-width="0.7"/>
<line x1="164.4" y1="315.6" x2="150.7" y2="330.9" stroke="#000" stroke-width="0.7"/>
<line x1="164.4" y1="315.6" x2="152.3" y2="332.4" stroke="#000" stroke-width="0.7"/>
<line x1="164.4" y1="315.6" x2="153.8" y2="334.0" stroke="#000" stroke-width="0.7"/>
<line x1="164.4" y1="315.6" x2="155.4" y2="335.5" stroke="#000" stroke-width="0.7"/>
<line x1="164.4" y1="315.6" x2="156.9" y2="337.1" stroke="#000" stroke-width="0.7"/>
<line x1="174.3" y1="311.3" x2="155.9" y2="305.7" stroke="#000" stroke-width="0.7"/>
<line x1="174.3" y1="311.3" x2="158.1" y2="307.8" stroke="#000" stroke-width="0.7"/>
<line x1="174.3" y1="311.3" x2="160.2" y2="309.9" stroke="#000" stroke-width="0.7"/>
<line x1="174.3" y1="311.3" x2="162.3" y2="312.0" stroke="#000" stroke-width="0.7"/>
<line x1="174.3" y1="311.3" x2="164.4" y2="314.2" stroke="#000" stroke-width="0.7"/>
<line x1="174.3" y1="311.3" x2="166.5" y2="316.3" stroke="#000" stroke-width="0.7"/>
<line x1="174.3" y1="311.3" x2="168.7" y2="318.4" stroke="#000" stroke-width="0.7"/>
<line x1="174.3" y1="311.3" x2="170.8" y2="320.5" stroke="#000" stroke-width="0.7"/>
<line x1="174.3" y1="311.3" x2="172.9" y2="322.7" stroke="#000" stroke-width="0.7"/>
<line x1="174.3" y1="311.3" x2="175.0" y2="324.8" stroke="#000" stroke-width="0.7"/>
<line x1="174.3" y1="311.3" x2="177.1" y2="326.9" stroke="#000" stroke-width="0.7"/>
<line x1="174.3" y1="311.3" x2="179.3" y2="329.0" stroke="#000" stroke-width="0.7"/>
<polyline points="152.0,328.0 144.3,335.7 157.9,341.5 170.9,350.2 185.1,356.7 196.7,366.0 199.6,355.4" fill="none" stroke="#000" stroke-width="0.8"/>
<polyline points="152.0,328.0 139.3,340.7 154.3,346.0 167.8,355.5 183.2,361.4 194.9,372.8 199.6,355.4" fill="none" stroke="#000" stroke-width="0.8"/>
<polyline points="152.0,328.0 134.4,345.6 151.6,349.5 166.7,357.5 181.1,366.7 193.1,379.5 199.6,355.4" fill="none" stroke="#000" stroke-width="0.8"/>
<polygon points="184.9,332.8 232.2,345.5 229.5,336.5 212.1,324.1 194.5,324.0" fill="url(#dMg)"/>
<polygon points="187.8,333.6 229.3,344.7 226.3,336.7 211.6,326.0 196.2,325.5" fill="#ffff00"/>
<polygon points="190.2,334.2 226.4,344.0 222.9,337.8 210.9,328.4 198.1,328.1" fill="#d00000"/>
<polygon points="198.4,336.4 217.7,341.6 209.9,332.3" fill="#780000"/>
<polygon points="186.4,358.1 209.6,364.3 210.9,343.9 204.2,338.0 195.5,339.8" fill="url(#dMg)"/>
<polygon points="190.9,353.1 208.3,357.7 209.5,341.5 204.2,338.0 197.9,338.4" fill="#ffff00"/>
<polygon points="192.6,350.4 208.1,354.6 209.0,341.4 204.2,338.0 198.4,338.5" fill="#d80000"/>
<polygon points="199.3,345.0 205.1,346.5 204.9,339.2 203.0,338.7" fill="#400000"/>
<line x1="204.1" y1="338.5" x2="189.2" y2="355.7" stroke="#000" stroke-width="0.7"/>
<line x1="204.1" y1="338.5" x2="191.4" y2="356.3" stroke="#000" stroke-width="0.7"/>
<line x1="204.1" y1="338.5" x2="193.5" y2="356.9" stroke="#000" stroke-width="0.7"/>
<line x1="204.1" y1="338.5" x2="195.6" y2="357.4" stroke="#000" stroke-width="0.7"/>
<line x1="204.1" y1="338.5" x2="197.7" y2="358.0" stroke="#000" stroke-width="0.7"/>
<line x1="204.1" y1="338.5" x2="199.9" y2="358.6" stroke="#000" stroke-width="0.7"/>
<line x1="204.1" y1="338.5" x2="202.0" y2="359.1" stroke="#000" stroke-width="0.7"/>
<line x1="204.1" y1="338.5" x2="204.1" y2="359.7" stroke="#000" stroke-width="0.7"/>
<line x1="204.1" y1="338.5" x2="206.2" y2="360.3" stroke="#000" stroke-width="0.7"/>
<line x1="204.1" y1="338.5" x2="208.4" y2="360.8" stroke="#000" stroke-width="0.7"/>
<line x1="210.5" y1="329.9" x2="191.8" y2="334.2" stroke="#000" stroke-width="0.7"/>
<line x1="210.5" y1="329.9" x2="194.7" y2="334.9" stroke="#000" stroke-width="0.7"/>
<line x1="210.5" y1="329.9" x2="197.6" y2="335.7" stroke="#000" stroke-width="0.7"/>
<line x1="210.5" y1="329.9" x2="200.5" y2="336.5" stroke="#000" stroke-width="0.7"/>
<line x1="210.5" y1="329.9" x2="203.4" y2="337.3" stroke="#000" stroke-width="0.7"/>
<line x1="210.5" y1="329.9" x2="206.3" y2="338.0" stroke="#000" stroke-width="0.7"/>
<line x1="210.5" y1="329.9" x2="209.2" y2="338.8" stroke="#000" stroke-width="0.7"/>
<line x1="210.5" y1="329.9" x2="212.1" y2="339.6" stroke="#000" stroke-width="0.7"/>
<line x1="210.5" y1="329.9" x2="215.0" y2="340.4" stroke="#000" stroke-width="0.7"/>
<line x1="210.5" y1="329.9" x2="217.9" y2="341.1" stroke="#000" stroke-width="0.7"/>
<line x1="210.5" y1="329.9" x2="220.8" y2="341.9" stroke="#000" stroke-width="0.7"/>
<line x1="210.5" y1="329.9" x2="223.7" y2="342.7" stroke="#000" stroke-width="0.7"/>
<polyline points="199.6,355.4 196.7,366.0 211.4,364.3 227.0,366.5 242.7,364.9 257.3,366.0 254.4,355.4" fill="none" stroke="#000" stroke-width="0.8"/>
<polyline points="199.6,355.4 194.9,372.8 210.8,368.2 227.0,369.7 243.4,369.4 259.1,372.8 254.4,355.4" fill="none" stroke="#000" stroke-width="0.8"/>
<polyline points="199.6,355.4 193.1,379.5 210.2,372.4 227.0,374.9 243.8,372.8 260.9,379.5 254.4,355.4" fill="none" stroke="#000" stroke-width="0.8"/>
<polygon points="269.1,332.8 221.8,345.5 224.5,336.5 241.9,324.1 259.5,324.0" fill="url(#dMg)"/>
<polygon points="266.2,333.6 224.7,344.7 227.7,336.7 242.4,326.0 257.8,325.5" fill="#ffff00"/>
<polygon points="263.8,334.2 227.6,344.0 231.1,337.8 243.1,328.4 255.9,328.1" fill="#d00000"/>
<polygon points="255.6,336.4 236.3,341.6 244.1,332.3" fill="#780000"/>
<polygon points="244.4,364.3 267.6,358.1 258.5,339.8 249.8,338.0 243.1,343.9" fill="url(#dMg)"/>
<polygon points="245.7,357.7 263.1,353.1 256.1,338.4 249.8,338.0 244.5,341.5" fill="#ffff00"/>
<polygon points="245.9,354.6 261.4,350.4 255.6,338.5 249.8,338.0 245.0,341.4" fill="#d80000"/>
<polygon points="248.9,346.5 254.7,345.0 251.0,338.7 249.1,339.2" fill="#400000"/>
<line x1="249.9" y1="338.5" x2="245.6" y2="360.8" stroke="#000" stroke-width="0.7"/>
<line x1="249.9" y1="338.5" x2="247.8" y2="360.3" stroke="#000" stroke-width="0.7"/>
<line x1="249.9" y1="338.5" x2="249.9" y2="359.7" stroke="#000" stroke-width="0.7"/>
<line x1="249.9" y1="338.5" x2="252.0" y2="359.1" stroke="#000" stroke-width="0.7"/>
<line x1="249.9" y1="338.5" x2="254.1" y2="358.6" stroke="#000" stroke-width="0.7"/>
<line x1="249.9" y1="338.5" x2="256.3" y2="358.0" stroke="#000" stroke-width="0.7"/>
<line x1="249.9" y1="338.5" x2="258.4" y2="357.4" stroke="#000" stroke-width="0.7"/>
<line x1="249.9" y1="338.5" x2="260.5" y2="356.9" stroke="#000" stroke-width="0.7"/>
<line x1="249.9" y1="338.5" x2="262.6" y2="356.3" stroke="#000" stroke-width="0.7"/>
<line x1="249.9" y1="338.5" x2="264.8" y2="355.7" stroke="#000" stroke-width="0.7"/>
<line x1="243.5" y1="329.9" x2="262.2" y2="334.2" stroke="#000" stroke-width="0.7"/>
<line x1="243.5" y1="329.9" x2="259.3" y2="334.9" stroke="#000" stroke-width="0.7"/>
<line x1="243.5" y1="329.9" x2="256.4" y2="335.7" stroke="#000" stroke-width="0.7"/>
<line x1="243.5" y1="329.9" x2="253.5" y2="336.5" stroke="#000" stroke-width="0.7"/>
<line x1="243.5" y1="329.9" x2="250.6" y2="337.3" stroke="#000" stroke-width="0.7"/>
<line x1="243.5" y1="329.9" x2="247.7" y2="338.0" stroke="#000" stroke-width="0.7"/>
<line x1="243.5" y1="329.9" x2="244.8" y2="338.8" stroke="#000" stroke-width="0.7"/>
<line x1="243.5" y1="329.9" x2="241.9" y2="339.6" stroke="#000" stroke-width="0.7"/>
<line x1="243.5" y1="329.9" x2="239.0" y2="340.4" stroke="#000" stroke-width="0.7"/>
<line x1="243.5" y1="329.9" x2="236.1" y2="341.1" stroke="#000" stroke-width="0.7"/>
<line x1="243.5" y1="329.9" x2="233.2" y2="341.9" stroke="#000" stroke-width="0.7"/>
<line x1="243.5" y1="329.9" x2="230.3" y2="342.7" stroke="#000" stroke-width="0.7"/>
<polyline points="254.4,355.4 257.3,366.0 268.5,355.8 282.3,348.8 296.4,341.9 309.7,335.7 302.0,328.0" fill="none" stroke="#000" stroke-width="0.8"/>
<polyline points="254.4,355.4 259.1,372.8 270.4,360.4 285.1,353.7 298.8,344.9 314.7,340.7 302.0,328.0" fill="none" stroke="#000" stroke-width="0.8"/>
<polyline points="254.4,355.4 260.9,379.5 273.1,367.1 287.4,357.6 302.0,349.0 319.6,345.6 302.0,328.0" fill="none" stroke="#000" stroke-width="0.8"/>
<polygon points="303.4,301.1 268.7,335.7 266.6,326.5 275.4,307.1 290.6,298.3" fill="url(#dMg)"/>
<polygon points="301.2,303.2 270.8,333.6 269.4,325.1 276.9,308.5 289.9,300.4" fill="#ffff00"/>
<polygon points="299.5,305.0 273.0,331.5 273.0,324.4 278.6,310.3 289.6,303.6" fill="#d00000"/>
<polygon points="293.5,311.0 279.3,325.1 281.4,313.1" fill="#780000"/>
<polygon points="297.7,340.7 314.7,323.7 297.7,312.4 289.2,315.2 286.4,323.7" fill="url(#dMg)"/>
<polygon points="295.6,334.3 308.3,321.6 294.9,312.4 289.2,315.2 286.4,320.9" fill="#ffff00"/>
<polygon points="294.2,331.5 305.5,320.2 294.5,312.8 289.2,315.2 286.8,320.5" fill="#d80000"/>
<polygon points="292.8,323.0 297.0,318.8 290.6,315.2 289.2,316.6" fill="#400000"/>
<line x1="289.6" y1="315.6" x2="297.1" y2="337.1" stroke="#000" stroke-width="0.7"/>
<line x1="289.6" y1="315.6" x2="298.6" y2="335.5" stroke="#000" stroke-width="0.7"/>
<line x1="289.6" y1="315.6" x2="300.2" y2="334.0" stroke="#000" stroke-width="0.7"/>
<line x1="289.6" y1="315.6" x2="301.7" y2="332.4" stroke="#000" stroke-width="0.7"/>
<line x1="289.6" y1="315.6" x2="303.3" y2="330.9" stroke="#000" stroke-width="0.7"/>
<line x1="289.6" y1="315.6" x2="304.9" y2="329.3" stroke="#000" stroke-width="0.7"/>
<line x1="289.6" y1="315.6" x2="306.4" y2="327.7" stroke="#000" stroke-width="0.7"/>
<line x1="289.6" y1="315.6" x2="308.0" y2="326.2" stroke="#000" stroke-width="0.7"/>
<line x1="289.6" y1="315.6" x2="309.5" y2="324.6" stroke="#000" stroke-width="0.7"/>
<line x1="289.6" y1="315.6" x2="311.1" y2="323.1" stroke="#000" stroke-width="0.7"/>
<line x1="279.7" y1="311.3" x2="298.1" y2="305.7" stroke="#000" stroke-width="0.7"/>
<line x1="279.7" y1="311.3" x2="295.9" y2="307.8" stroke="#000" stroke-width="0.7"/>
<line x1="279.7" y1="311.3" x2="293.8" y2="309.9" stroke="#000" stroke-width="0.7"/>
<line x1="279.7" y1="311.3" x2="291.7" y2="312.0" stroke="#000" stroke-width="0.7"/>
<line x1="279.7" y1="311.3" x2="289.6" y2="314.2" stroke="#000" stroke-width="0.7"/>
<line x1="279.7" y1="311.3" x2="287.5" y2="316.3" stroke="#000" stroke-width="0.7"/>
<line x1="279.7" y1="311.3" x2="285.3" y2="318.4" stroke="#000" stroke-width="0.7"/>
<line x1="279.7" y1="311.3" x2="283.2" y2="320.5" stroke="#000" stroke-width="0.7"/>
<line x1="279.7" y1="311.3" x2="281.1" y2="322.7" stroke="#000" stroke-width="0.7"/>
<line x1="279.7" y1="311.3" x2="279.0" y2="324.8" stroke="#000" stroke-width="0.7"/>
<line x1="279.7" y1="311.3" x2="276.9" y2="326.9" stroke="#000" stroke-width="0.7"/>
<line x1="279.7" y1="311.3" x2="274.7" y2="329.0" stroke="#000" stroke-width="0.7"/>
<polyline points="302.0,328.0 309.7,335.7 315.4,322.0 325.0,309.6 331.7,295.3 340.0,283.3 329.4,280.4" fill="none" stroke="#000" stroke-width="0.8"/>
<polyline points="302.0,328.0 314.7,340.7 320.1,325.7 327.7,311.2 335.2,296.7 346.8,285.1 329.4,280.4" fill="none" stroke="#000" stroke-width="0.8"/>
<polyline points="302.0,328.0 319.6,345.6 322.8,327.8 333.7,314.6 341.4,299.2 353.5,286.9 329.4,280.4" fill="none" stroke="#000" stroke-width="0.8"/>
<polygon points="317.2,256.5 304.5,303.8 298.1,296.9 296.0,275.6 304.7,260.4" fill="url(#dMg)"/>
<polygon points="316.4,259.4 305.3,300.9 299.8,294.2 297.9,276.1 305.2,262.6" fill="#ffff00"/>
<polygon points="315.8,261.8 306.0,298.0 302.5,291.9 300.3,276.8 306.5,265.5" fill="#d00000"/>
<polygon points="313.6,270.0 308.4,289.3 304.2,277.8" fill="#780000"/>
<polygon points="332.1,293.6 338.3,270.4 317.9,269.1 312.0,275.8 313.8,284.5" fill="url(#dMg)"/>
<polygon points="327.1,289.1 331.7,271.7 315.5,270.5 312.0,275.8 312.4,282.1" fill="#ffff00"/>
<polygon points="324.4,287.4 328.6,271.9 315.4,271.0 312.0,275.8 312.5,281.6" fill="#d80000"/>
<polygon points="319.0,280.7 320.5,274.9 313.2,275.1 312.7,277.0" fill="#400000"/>
<line x1="312.5" y1="275.9" x2="329.7" y2="290.8" stroke="#000" stroke-width="0.7"/>
<line x1="312.5" y1="275.9" x2="330.3" y2="288.6" stroke="#000" stroke-width="0.7"/>
<line x1="312.5" y1="275.9" x2="330.9" y2="286.5" stroke="#000" stroke-width="0.7"/>
<line x1="312.5" y1="275.9" x2="331.4" y2="284.4" stroke="#000" stroke-width="0.7"/>
<line x1="312.5" y1="275.9" x2="332.0" y2="282.3" stroke="#000" stroke-width="0.7"/>
<line x1="312.5" y1="275.9" x2="332.6" y2="280.1" stroke="#000" stroke-width="0.7"/>
<line x1="312.5" y1="275.9" x2="333.1" y2="278.0" stroke="#000" stroke-width="0.7"/>
<line x1="312.5" y1="275.9" x2="333.7" y2="275.9" stroke="#000" stroke-width="0.7"/>
<line x1="312.5" y1="275.9" x2="334.3" y2="273.8" stroke="#000" stroke-width="0.7"/>
<line x1="312.5" y1="275.9" x2="334.8" y2="271.6" stroke="#000" stroke-width="0.7"/>
<line x1="301.8" y1="277.2" x2="314.9" y2="263.1" stroke="#000" stroke-width="0.7"/>
<line x1="301.8" y1="277.2" x2="314.1" y2="266.0" stroke="#000" stroke-width="0.7"/>
<line x1="301.8" y1="277.2" x2="313.3" y2="268.9" stroke="#000" stroke-width="0.7"/>
<line x1="301.8" y1="277.2" x2="312.6" y2="271.8" stroke="#000" stroke-width="0.7"/>
<line x1="301.8" y1="277.2" x2="311.8" y2="274.7" stroke="#000" stroke-width="0.7"/>
<line x1="301.8" y1="277.2" x2="311.0" y2="277.6" stroke="#000" stroke-width="0.7"/>
<line x1="301.8" y1="277.2" x2="310.2" y2="280.5" stroke="#000" stroke-width="0.7"/>
<line x1="301.8" y1="277.2" x2="309.4" y2="283.4" stroke="#000" stroke-width="0.7"/>
<line x1="301.8" y1="277.2" x2="308.7" y2="286.3" stroke="#000" stroke-width="0.7"/>
<line x1="301.8" y1="277.2" x2="307.9" y2="289.2" stroke="#000" stroke-width="0.7"/>
<line x1="301.8" y1="277.2" x2="307.1" y2="292.1" stroke="#000" stroke-width="0.7"/>
<line x1="301.8" y1="277.2" x2="306.3" y2="295.0" stroke="#000" stroke-width="0.7"/>
<polyline points="329.4,280.4 340.0,283.3 336.9,268.4 338.0,253.0 337.1,237.5 340.0,222.7 329.4,225.6" fill="none" stroke="#000" stroke-width="0.8"/>
<polyline points="329.4,280.4 346.8,285.1 342.1,269.2 344.0,253.0 343.1,236.7 346.8,220.9 329.4,225.6" fill="none" stroke="#000" stroke-width="0.8"/>
<polyline points="329.4,280.4 353.5,286.9 347.1,269.9 347.5,253.0 347.6,236.1 353.5,219.1 329.4,225.6" fill="none" stroke="#000" stroke-width="0.8"/>
<polygon points="334.5,271.5 334.5,234.5 315.0,234.5 315.0,271.5" fill="url(#dLg)"/>
<line x1="315.0" y1="264.0" x2="302.0" y2="260.0" stroke="#000" stroke-width="0.9"/>
<line x1="315.0" y1="259.0" x2="302.0" y2="257.0" stroke="#000" stroke-width="0.9"/>
<line x1="315.0" y1="254.0" x2="302.0" y2="254.0" stroke="#000" stroke-width="0.9"/>
<line x1="315.0" y1="249.0" x2="302.0" y2="251.0" stroke="#000" stroke-width="0.9"/>
<line x1="315.0" y1="244.0" x2="302.0" y2="248.0" stroke="#000" stroke-width="0.9"/>
<line x1="334.5" y1="266.5" x2="315.0" y2="269.0" stroke="#000" stroke-width="0.85"/>
<line x1="334.5" y1="261.5" x2="315.0" y2="264.0" stroke="#000" stroke-width="0.85"/>
<line x1="334.5" y1="256.5" x2="315.0" y2="259.0" stroke="#000" stroke-width="0.85"/>
<line x1="334.5" y1="251.5" x2="315.0" y2="254.0" stroke="#000" stroke-width="0.85"/>
<line x1="334.5" y1="246.5" x2="315.0" y2="249.0" stroke="#000" stroke-width="0.85"/>
<line x1="334.5" y1="241.5" x2="315.0" y2="244.0" stroke="#000" stroke-width="0.85"/>
<line x1="334.5" y1="236.5" x2="315.0" y2="239.0" stroke="#000" stroke-width="0.85"/>
<polygon points="334.5,271.5 334.5,234.5 315.0,234.5 315.0,271.5" fill="none" stroke="#fff" stroke-width="1"/>
<polygon points="329.3,215.3 310.8,183.2 294.0,193.0 312.5,225.0" fill="url(#dLg)"/>
<line x1="308.7" y1="218.5" x2="295.5" y2="221.6" stroke="#000" stroke-width="0.9"/>
<line x1="306.2" y1="214.2" x2="294.0" y2="219.0" stroke="#000" stroke-width="0.9"/>
<line x1="303.7" y1="209.9" x2="292.5" y2="216.4" stroke="#000" stroke-width="0.9"/>
<line x1="301.2" y1="205.5" x2="291.0" y2="213.8" stroke="#000" stroke-width="0.9"/>
<line x1="298.7" y1="201.2" x2="289.5" y2="211.2" stroke="#000" stroke-width="0.9"/>
<line x1="326.8" y1="210.9" x2="311.2" y2="222.9" stroke="#000" stroke-width="0.85"/>
<line x1="324.3" y1="206.6" x2="308.7" y2="218.5" stroke="#000" stroke-width="0.85"/>
<line x1="321.8" y1="202.3" x2="306.2" y2="214.2" stroke="#000" stroke-width="0.85"/>
<line x1="319.3" y1="198.0" x2="303.7" y2="209.9" stroke="#000" stroke-width="0.85"/>
<line x1="316.8" y1="193.6" x2="301.2" y2="205.5" stroke="#000" stroke-width="0.85"/>
<line x1="314.3" y1="189.3" x2="298.7" y2="201.2" stroke="#000" stroke-width="0.85"/>
<line x1="311.8" y1="185.0" x2="296.2" y2="196.9" stroke="#000" stroke-width="0.85"/>
<polygon points="329.3,215.3 310.8,183.2 294.0,193.0 312.5,225.0" fill="none" stroke="#fff" stroke-width="1"/>
<polygon points="296.8,169.2 264.7,150.7 255.0,167.5 287.0,186.0" fill="url(#dMg)"/>
<line x1="280.5" y1="182.3" x2="270.6" y2="191.5" stroke="#000" stroke-width="0.9"/>
<line x1="276.2" y1="179.8" x2="268.0" y2="190.0" stroke="#000" stroke-width="0.9"/>
<line x1="271.9" y1="177.3" x2="265.4" y2="188.5" stroke="#000" stroke-width="0.9"/>
<line x1="267.5" y1="174.8" x2="262.8" y2="187.0" stroke="#000" stroke-width="0.9"/>
<line x1="263.2" y1="172.3" x2="260.2" y2="185.5" stroke="#000" stroke-width="0.9"/>
<line x1="292.4" y1="166.7" x2="284.9" y2="184.8" stroke="#000" stroke-width="0.85"/>
<line x1="288.1" y1="164.2" x2="280.5" y2="182.3" stroke="#000" stroke-width="0.85"/>
<line x1="283.8" y1="161.7" x2="276.2" y2="179.8" stroke="#000" stroke-width="0.85"/>
<line x1="279.5" y1="159.2" x2="271.9" y2="177.3" stroke="#000" stroke-width="0.85"/>
<line x1="275.1" y1="156.7" x2="267.5" y2="174.8" stroke="#000" stroke-width="0.85"/>
<line x1="270.8" y1="154.2" x2="263.2" y2="172.3" stroke="#000" stroke-width="0.85"/>
<line x1="266.5" y1="151.7" x2="258.9" y2="169.8" stroke="#000" stroke-width="0.85"/>
<polygon points="296.8,169.2 264.7,150.7 255.0,167.5 287.0,186.0" fill="none" stroke="#fff" stroke-width="1"/>
<polygon points="245.5,145.5 208.5,145.5 208.5,165.0 245.5,165.0" fill="url(#dMg)"/>
<line x1="238.0" y1="165.0" x2="234.0" y2="178.0" stroke="#000" stroke-width="0.9"/>
<line x1="233.0" y1="165.0" x2="231.0" y2="178.0" stroke="#000" stroke-width="0.9"/>
<line x1="228.0" y1="165.0" x2="228.0" y2="178.0" stroke="#000" stroke-width="0.9"/>
<line x1="223.0" y1="165.0" x2="225.0" y2="178.0" stroke="#000" stroke-width="0.9"/>
<line x1="218.0" y1="165.0" x2="222.0" y2="178.0" stroke="#000" stroke-width="0.9"/>
<line x1="240.5" y1="145.5" x2="243.0" y2="165.0" stroke="#000" stroke-width="0.85"/>
<line x1="235.5" y1="145.5" x2="238.0" y2="165.0" stroke="#000" stroke-width="0.85"/>
<line x1="230.5" y1="145.5" x2="233.0" y2="165.0" stroke="#000" stroke-width="0.85"/>
<line x1="225.5" y1="145.5" x2="228.0" y2="165.0" stroke="#000" stroke-width="0.85"/>
<line x1="220.5" y1="145.5" x2="223.0" y2="165.0" stroke="#000" stroke-width="0.85"/>
<line x1="215.5" y1="145.5" x2="218.0" y2="165.0" stroke="#000" stroke-width="0.85"/>
<line x1="210.5" y1="145.5" x2="213.0" y2="165.0" stroke="#000" stroke-width="0.85"/>
<polygon points="245.5,145.5 208.5,145.5 208.5,165.0 245.5,165.0" fill="none" stroke="#fff" stroke-width="1"/>
<polygon points="189.3,150.7 157.2,169.2 167.0,186.0 199.0,167.5" fill="url(#dMg)"/>
<line x1="192.5" y1="171.3" x2="195.6" y2="184.5" stroke="#000" stroke-width="0.9"/>
<line x1="188.2" y1="173.8" x2="193.0" y2="186.0" stroke="#000" stroke-width="0.9"/>
<line x1="183.9" y1="176.3" x2="190.4" y2="187.5" stroke="#000" stroke-width="0.9"/>
<line x1="179.5" y1="178.8" x2="187.8" y2="189.0" stroke="#000" stroke-width="0.9"/>
<line x1="175.2" y1="181.3" x2="185.2" y2="190.5" stroke="#000" stroke-width="0.9"/>
<line x1="184.9" y1="153.2" x2="196.9" y2="168.8" stroke="#000" stroke-width="0.85"/>
<line x1="180.6" y1="155.7" x2="192.5" y2="171.3" stroke="#000" stroke-width="0.85"/>
<line x1="176.3" y1="158.2" x2="188.2" y2="173.8" stroke="#000" stroke-width="0.85"/>
<line x1="172.0" y1="160.7" x2="183.9" y2="176.3" stroke="#000" stroke-width="0.85"/>
<line x1="167.6" y1="163.2" x2="179.5" y2="178.8" stroke="#000" stroke-width="0.85"/>
<line x1="163.3" y1="165.7" x2="175.2" y2="181.3" stroke="#000" stroke-width="0.85"/>
<line x1="159.0" y1="168.2" x2="170.9" y2="183.8" stroke="#000" stroke-width="0.85"/>
<polygon points="189.3,150.7 157.2,169.2 167.0,186.0 199.0,167.5" fill="none" stroke="#fff" stroke-width="1"/>
<polygon points="143.2,183.2 124.7,215.3 141.5,225.0 160.0,193.0" fill="url(#dLg)"/>
<line x1="156.3" y1="199.5" x2="165.5" y2="209.4" stroke="#000" stroke-width="0.9"/>
<line x1="153.8" y1="203.8" x2="164.0" y2="212.0" stroke="#000" stroke-width="0.9"/>
<line x1="151.3" y1="208.1" x2="162.5" y2="214.6" stroke="#000" stroke-width="0.9"/>
<line x1="148.8" y1="212.5" x2="161.0" y2="217.2" stroke="#000" stroke-width="0.9"/>
<line x1="146.3" y1="216.8" x2="159.5" y2="219.8" stroke="#000" stroke-width="0.9"/>
<line x1="140.7" y1="187.6" x2="158.8" y2="195.1" stroke="#000" stroke-width="0.85"/>
<line x1="138.2" y1="191.9" x2="156.3" y2="199.5" stroke="#000" stroke-width="0.85"/>
<line x1="135.7" y1="196.2" x2="153.8" y2="203.8" stroke="#000" stroke-width="0.85"/>
<line x1="133.2" y1="200.5" x2="151.3" y2="208.1" stroke="#000" stroke-width="0.85"/>
<line x1="130.7" y1="204.9" x2="148.8" y2="212.5" stroke="#000" stroke-width="0.85"/>
<line x1="128.2" y1="209.2" x2="146.3" y2="216.8" stroke="#000" stroke-width="0.85"/>
<line x1="125.7" y1="213.5" x2="143.8" y2="221.1" stroke="#000" stroke-width="0.85"/>
<polygon points="143.2,183.2 124.7,215.3 141.5,225.0 160.0,193.0" fill="none" stroke="#fff" stroke-width="1"/>
<polygon points="119.5,234.5 119.5,271.5 139.0,271.5 139.0,234.5" fill="url(#dLg)"/>
<line x1="139.0" y1="242.0" x2="152.0" y2="246.0" stroke="#000" stroke-width="0.9"/>
<line x1="139.0" y1="247.0" x2="152.0" y2="249.0" stroke="#000" stroke-width="0.9"/>
<line x1="139.0" y1="252.0" x2="152.0" y2="252.0" stroke="#000" stroke-width="0.9"/>
<line x1="139.0" y1="257.0" x2="152.0" y2="255.0" stroke="#000" stroke-width="0.9"/>
<line x1="139.0" y1="262.0" x2="152.0" y2="258.0" stroke="#000" stroke-width="0.9"/>
<line x1="119.5" y1="239.5" x2="139.0" y2="237.0" stroke="#000" stroke-width="0.85"/>
<line x1="119.5" y1="244.5" x2="139.0" y2="242.0" stroke="#000" stroke-width="0.85"/>
<line x1="119.5" y1="249.5" x2="139.0" y2="247.0" stroke="#000" stroke-width="0.85"/>
<line x1="119.5" y1="254.5" x2="139.0" y2="252.0" stroke="#000" stroke-width="0.85"/>
<line x1="119.5" y1="259.5" x2="139.0" y2="257.0" stroke="#000" stroke-width="0.85"/>
<line x1="119.5" y1="264.5" x2="139.0" y2="262.0" stroke="#000" stroke-width="0.85"/>
<line x1="119.5" y1="269.5" x2="139.0" y2="267.0" stroke="#000" stroke-width="0.85"/>
<polygon points="119.5,234.5 119.5,271.5 139.0,271.5 139.0,234.5" fill="none" stroke="#fff" stroke-width="1"/>
<polygon points="124.7,290.7 143.2,322.8 160.0,313.0 141.5,281.0" fill="url(#dLg)"/>
<line x1="145.3" y1="287.5" x2="158.5" y2="284.4" stroke="#000" stroke-width="0.9"/>
<line x1="147.8" y1="291.8" x2="160.0" y2="287.0" stroke="#000" stroke-width="0.9"/>
<line x1="150.3" y1="296.1" x2="161.5" y2="289.6" stroke="#000" stroke-width="0.9"/>
<line x1="152.8" y1="300.5" x2="163.0" y2="292.2" stroke="#000" stroke-width="0.9"/>
<line x1="155.3" y1="304.8" x2="164.5" y2="294.8" stroke="#000" stroke-width="0.9"/>
<line x1="127.2" y1="295.1" x2="142.8" y2="283.1" stroke="#000" stroke-width="0.85"/>
<line x1="129.7" y1="299.4" x2="145.3" y2="287.5" stroke="#000" stroke-width="0.85"/>
<line x1="132.2" y1="303.7" x2="147.8" y2="291.8" stroke="#000" stroke-width="0.85"/>
<line x1="134.7" y1="308.0" x2="150.3" y2="296.1" stroke="#000" stroke-width="0.85"/>
<line x1="137.2" y1="312.4" x2="152.8" y2="300.5" stroke="#000" stroke-width="0.85"/>
<line x1="139.7" y1="316.7" x2="155.3" y2="304.8" stroke="#000" stroke-width="0.85"/>
<line x1="142.2" y1="321.0" x2="157.8" y2="309.1" stroke="#000" stroke-width="0.85"/>
<polygon points="124.7,290.7 143.2,322.8 160.0,313.0 141.5,281.0" fill="none" stroke="#fff" stroke-width="1"/>
<polygon points="157.2,336.8 189.3,355.3 199.0,338.5 167.0,320.0" fill="url(#dLg)"/>
<line x1="173.5" y1="323.7" x2="183.4" y2="314.5" stroke="#000" stroke-width="0.9"/>
<line x1="177.8" y1="326.2" x2="186.0" y2="316.0" stroke="#000" stroke-width="0.9"/>
<line x1="182.1" y1="328.7" x2="188.6" y2="317.5" stroke="#000" stroke-width="0.9"/>
<line x1="186.5" y1="331.2" x2="191.2" y2="319.0" stroke="#000" stroke-width="0.9"/>
<line x1="190.8" y1="333.7" x2="193.8" y2="320.5" stroke="#000" stroke-width="0.9"/>
<line x1="161.6" y1="339.3" x2="169.1" y2="321.2" stroke="#000" stroke-width="0.85"/>
<line x1="165.9" y1="341.8" x2="173.5" y2="323.7" stroke="#000" stroke-width="0.85"/>
<line x1="170.2" y1="344.3" x2="177.8" y2="326.2" stroke="#000" stroke-width="0.85"/>
<line x1="174.5" y1="346.8" x2="182.1" y2="328.7" stroke="#000" stroke-width="0.85"/>
<line x1="178.9" y1="349.3" x2="186.5" y2="331.2" stroke="#000" stroke-width="0.85"/>
<line x1="183.2" y1="351.8" x2="190.8" y2="333.7" stroke="#000" stroke-width="0.85"/>
<line x1="187.5" y1="354.3" x2="195.1" y2="336.2" stroke="#000" stroke-width="0.85"/>
<polygon points="157.2,336.8 189.3,355.3 199.0,338.5 167.0,320.0" fill="none" stroke="#fff" stroke-width="1"/>
<polygon points="208.5,360.5 245.5,360.5 245.5,341.0 208.5,341.0" fill="url(#dLg)"/>
<line x1="216.0" y1="341.0" x2="220.0" y2="328.0" stroke="#000" stroke-width="0.9"/>
<line x1="221.0" y1="341.0" x2="223.0" y2="328.0" stroke="#000" stroke-width="0.9"/>
<line x1="226.0" y1="341.0" x2="226.0" y2="328.0" stroke="#000" stroke-width="0.9"/>
<line x1="231.0" y1="341.0" x2="229.0" y2="328.0" stroke="#000" stroke-width="0.9"/>
<line x1="236.0" y1="341.0" x2="232.0" y2="328.0" stroke="#000" stroke-width="0.9"/>
<line x1="213.5" y1="360.5" x2="211.0" y2="341.0" stroke="#000" stroke-width="0.85"/>
<line x1="218.5" y1="360.5" x2="216.0" y2="341.0" stroke="#000" stroke-width="0.85"/>
<line x1="223.5" y1="360.5" x2="221.0" y2="341.0" stroke="#000" stroke-width="0.85"/>
<line x1="228.5" y1="360.5" x2="226.0" y2="341.0" stroke="#000" stroke-width="0.85"/>
<line x1="233.5" y1="360.5" x2="231.0" y2="341.0" stroke="#000" stroke-width="0.85"/>
<line x1="238.5" y1="360.5" x2="236.0" y2="341.0" stroke="#000" stroke-width="0.85"/>
<line x1="243.5" y1="360.5" x2="241.0" y2="341.0" stroke="#000" stroke-width="0.85"/>
<polygon points="208.5,360.5 245.5,360.5 245.5,341.0 208.5,341.0" fill="none" stroke="#fff" stroke-width="1"/>
<polygon points="264.7,355.3 296.8,336.8 287.0,320.0 255.0,338.5" fill="url(#dLg)"/>
<line x1="261.5" y1="334.7" x2="258.4" y2="321.5" stroke="#000" stroke-width="0.9"/>
<line x1="265.8" y1="332.2" x2="261.0" y2="320.0" stroke="#000" stroke-width="0.9"/>
<line x1="270.1" y1="329.7" x2="263.6" y2="318.5" stroke="#000" stroke-width="0.9"/>
<line x1="274.5" y1="327.2" x2="266.2" y2="317.0" stroke="#000" stroke-width="0.9"/>
<line x1="278.8" y1="324.7" x2="268.8" y2="315.5" stroke="#000" stroke-width="0.9"/>
<line x1="269.1" y1="352.8" x2="257.1" y2="337.2" stroke="#000" stroke-width="0.85"/>
<line x1="273.4" y1="350.3" x2="261.5" y2="334.7" stroke="#000" stroke-width="0.85"/>
<line x1="277.7" y1="347.8" x2="265.8" y2="332.2" stroke="#000" stroke-width="0.85"/>
<line x1="282.0" y1="345.3" x2="270.1" y2="329.7" stroke="#000" stroke-width="0.85"/>
<line x1="286.4" y1="342.8" x2="274.5" y2="327.2" stroke="#000" stroke-width="0.85"/>
<line x1="290.7" y1="340.3" x2="278.8" y2="324.7" stroke="#000" stroke-width="0.85"/>
<line x1="295.0" y1="337.8" x2="283.1" y2="322.2" stroke="#000" stroke-width="0.85"/>
<polygon points="264.7,355.3 296.8,336.8 287.0,320.0 255.0,338.5" fill="none" stroke="#fff" stroke-width="1"/>
<polygon points="310.8,322.8 329.3,290.7 312.5,281.0 294.0,313.0" fill="url(#dLg)"/>
<line x1="297.7" y1="306.5" x2="288.5" y2="296.6" stroke="#000" stroke-width="0.9"/>
<line x1="300.2" y1="302.2" x2="290.0" y2="294.0" stroke="#000" stroke-width="0.9"/>
<line x1="302.7" y1="297.9" x2="291.5" y2="291.4" stroke="#000" stroke-width="0.9"/>
<line x1="305.2" y1="293.5" x2="293.0" y2="288.8" stroke="#000" stroke-width="0.9"/>
<line x1="307.7" y1="289.2" x2="294.5" y2="286.2" stroke="#000" stroke-width="0.9"/>
<line x1="313.3" y1="318.4" x2="295.2" y2="310.9" stroke="#000" stroke-width="0.85"/>
<line x1="315.8" y1="314.1" x2="297.7" y2="306.5" stroke="#000" stroke-width="0.85"/>
<line x1="318.3" y1="309.8" x2="300.2" y2="302.2" stroke="#000" stroke-width="0.85"/>
<line x1="320.8" y1="305.5" x2="302.7" y2="297.9" stroke="#000" stroke-width="0.85"/>
<line x1="323.3" y1="301.1" x2="305.2" y2="293.5" stroke="#000" stroke-width="0.85"/>
<line x1="325.8" y1="296.8" x2="307.7" y2="289.2" stroke="#000" stroke-width="0.85"/>
<line x1="328.3" y1="292.5" x2="310.2" y2="284.9" stroke="#000" stroke-width="0.85"/>
<polygon points="310.8,322.8 329.3,290.7 312.5,281.0 294.0,313.0" fill="none" stroke="#fff" stroke-width="1"/>
<polygon points="298.0,253.0 288.5,217.5 262.5,191.5 227.0,182.0 191.5,191.5 165.5,217.5 156.0,253.0 165.5,288.5 191.5,314.5 227.0,324.0 262.5,314.5 288.5,288.5" fill="none" stroke="#fff" stroke-width="1"/>
<polygon points="315.0,271.5 315.0,234.5 312.5,225.0 294.0,193.0 287.0,186.0 255.0,167.5 245.5,165.0 208.5,165.0 199.0,167.5 167.0,186.0 160.0,193.0 141.5,225.0 139.0,234.5 139.0,271.5 141.5,281.0 160.0,313.0 167.0,320.0 199.0,338.5 208.5,341.0 245.5,341.0 255.0,338.5 287.0,320.0 294.0,313.0 312.5,281.0" fill="none" stroke="#fff" stroke-width="0.9"/>
<polygon points="196.7,97.0 174.0,103.0 174.0,110.0 188.0,104.0" fill="#00ff00"/>
<polygon points="178.0,102.0 174.0,104.0 174.0,110.0 182.0,106.0" fill="#ffff00"/>
<polyline points="174.0,107.0 128.0,108.5 112.0,116.0 102.0,130.0 98.0,142.0 93.0,169.0 92.5,173.0" fill="none" stroke="#fff" stroke-width="11" stroke-linejoin="round" stroke-linecap="square"/>
<polyline points="174.0,107.0 128.0,108.5 112.0,116.0 102.0,130.0 98.0,142.0 93.0,169.0 92.5,173.0" fill="none" stroke="url(#arcHatch)" stroke-width="8.6" stroke-linejoin="round" stroke-linecap="square"/>
<polyline points="174.9,98.1 126.4,99.9 106.6,107.8 92.6,126.7 88.5,139.2 85.6,167.5 84.5,175.3" fill="none" stroke="#000" stroke-width="0.9"/>
<polyline points="176.0,92.5 126.5,96.2 103.5,106.3 90.6,122.3 85.6,139.2 79.1,165.4 80.1,175.0" fill="none" stroke="#000" stroke-width="0.9"/>
<polyline points="176.1,90.1 126.1,91.9 100.2,103.0 86.0,122.8 81.6,136.7 74.1,165.3 75.9,174.5" fill="none" stroke="#000" stroke-width="0.9"/>
<polyline points="176.2,115.0 129.1,116.4 117.1,122.2 109.0,133.8 105.8,143.8 100.9,170.5" fill="none" stroke="#000" stroke-width="0.9"/>
<line x1="94" y1="176" x2="40" y2="205" stroke="#000" stroke-width="0.8"/>
<line x1="94" y1="176" x2="55" y2="215" stroke="#000" stroke-width="0.8"/>
<line x1="94" y1="176" x2="70" y2="230" stroke="#000" stroke-width="0.8"/>
<line x1="94" y1="176" x2="85" y2="245" stroke="#000" stroke-width="0.8"/>
<line x1="94" y1="176" x2="100" y2="235" stroke="#000" stroke-width="0.8"/>
<line x1="94" y1="176" x2="112" y2="215" stroke="#000" stroke-width="0.8"/>
<line x1="94" y1="176" x2="120" y2="200" stroke="#000" stroke-width="0.8"/>
<line x1="176" y1="108" x2="200" y2="96" stroke="#000" stroke-width="0.8"/>
<line x1="176" y1="108" x2="205" y2="105" stroke="#000" stroke-width="0.8"/>
<line x1="176" y1="108" x2="200" y2="118" stroke="#000" stroke-width="0.8"/>
<line x1="176" y1="108" x2="190" y2="128" stroke="#000" stroke-width="0.8"/>
<line x1="176" y1="108" x2="215" y2="90" stroke="#000" stroke-width="0.8"/>
<polyline points="37.8,118.7 39.6,72.0 63.0,43.2 104.3,36.0 127.7,41.4 135.0,57.6 151.0,70.1 153.0,86.0 158.0,96.0" fill="none" stroke="#000" stroke-width="1"/>
<polyline points="165.5,3.0 169.0,18.0 180.0,54.0 172.7,72.0 176.0,88.0" fill="none" stroke="#000" stroke-width="1"/>
<polyline points="230.0,50.4 208.6,61.0 199.6,82.7 204.0,94.0" fill="none" stroke="#000" stroke-width="1"/>
<polyline points="0.0,154.0 32.4,152.4 60.0,158.0 75.5,165.0 84.0,176.0" fill="none" stroke="#000" stroke-width="1"/>
<polyline points="3.0,231.5 18.0,231.5 46.8,195.5 84.5,179.4" fill="none" stroke="#000" stroke-width="1"/>
<polyline points="43.0,250.0 90.0,184.7" fill="none" stroke="#000" stroke-width="1"/>
<polyline points="70.0,250.0 88.0,199.0" fill="none" stroke="#000" stroke-width="1"/>
<polyline points="18.0,250.0 14.4,293.0 21.6,314.7 43.0,347.0 77.3,368.7 115.0,372.3 129.5,361.5 136.7,350.7" fill="none" stroke="#000" stroke-width="1"/>
<polyline points="18.0,250.0 20.0,200.0 14.0,150.0 20.0,120.0 37.8,118.7" fill="none" stroke="#000" stroke-width="1"/>
<polyline points="200.0,72.0 210.4,53.9 231.0,48.6 252.0,43.4 275.5,39.8 291.0,43.4 312.0,48.6 335.4,66.9 356.0,93.0 366.7,113.8 369.0,139.8 368.8,147.0 360.0,166.6 340.6,180.6 323.8,186.3" fill="none" stroke="#000" stroke-width="1"/>
<polyline points="200.0,98.0 220.8,87.7 236.5,108.5 239.0,124.0" fill="none" stroke="#000" stroke-width="1"/>
<polyline points="343.5,220.0 371.6,231.3 366.0,259.4 346.3,262.0" fill="none" stroke="#000" stroke-width="1"/>
<polyline points="346.0,293.0 360.0,310.0 337.8,318.5" fill="none" stroke="#000" stroke-width="1"/>
<polyline points="262.5,223.0 291.0,225.7" fill="none" stroke="#000" stroke-width="1"/>
<polyline points="210.4,181.5 223.4,207.5" fill="none" stroke="#000" stroke-width="1"/>
<polyline points="260.6,271.6 311.0,277.0" fill="none" stroke="#000" stroke-width="1"/>
<polyline points="255.0,289.6 255.0,322.0" fill="none" stroke="#000" stroke-width="1"/>
<polyline points="162.0,384.0 172.7,387.5 194.0,384.0 194.0,374.0" fill="none" stroke="#000" stroke-width="1"/>
<polyline points="291.0,360.6 327.0,344.4 300.0,345.0" fill="none" stroke="#000" stroke-width="1"/>
<polyline points="230.0,376.8 257.0,387.5 258.0,378.0" fill="none" stroke="#000" stroke-width="1"/>
<polyline points="120.0,330.0 125.0,345.0 137.0,347.0" fill="none" stroke="#000" stroke-width="1"/>
<polyline points="80.0,200.0 65.0,230.0 72.0,262.0 92.0,262.0" fill="none" stroke="#000" stroke-width="1"/>
<rect x="37" y="11" width="3" height="3" fill="#000" shape-rendering="crispEdges"/>
<rect x="91" y="11" width="3" height="3" fill="#000" shape-rendering="crispEdges"/>
<rect x="144" y="11" width="3" height="3" fill="#000" shape-rendering="crispEdges"/>
<rect x="198" y="11" width="3" height="3" fill="#000" shape-rendering="crispEdges"/>
<rect x="251" y="11" width="3" height="3" fill="#000" shape-rendering="crispEdges"/>
<rect x="305" y="11" width="3" height="3" fill="#000" shape-rendering="crispEdges"/>
<rect x="359" y="11" width="3" height="3" fill="#000" shape-rendering="crispEdges"/>
<rect x="412" y="11" width="3" height="3" fill="#000" shape-rendering="crispEdges"/>
<rect x="37" y="65" width="3" height="3" fill="#000" shape-rendering="crispEdges"/>
<rect x="91" y="65" width="3" height="3" fill="#000" shape-rendering="crispEdges"/>
<rect x="144" y="65" width="3" height="3" fill="#000" shape-rendering="crispEdges"/>
<rect x="198" y="65" width="3" height="3" fill="#000" shape-rendering="crispEdges"/>
<rect x="251" y="65" width="3" height="3" fill="#000" shape-rendering="crispEdges"/>
<rect x="305" y="65" width="3" height="3" fill="#000" shape-rendering="crispEdges"/>
<rect x="359" y="65" width="3" height="3" fill="#000" shape-rendering="crispEdges"/>
<rect x="412" y="65" width="3" height="3" fill="#000" shape-rendering="crispEdges"/>
<rect x="37" y="118" width="3" height="3" fill="#000" shape-rendering="crispEdges"/>
<rect x="91" y="118" width="3" height="3" fill="#000" shape-rendering="crispEdges"/>
<rect x="144" y="118" width="3" height="3" fill="#000" shape-rendering="crispEdges"/>
<rect x="198" y="118" width="3" height="3" fill="#000" shape-rendering="crispEdges"/>
<rect x="251" y="118" width="3" height="3" fill="#000" shape-rendering="crispEdges"/>
<rect x="305" y="118" width="3" height="3" fill="#000" shape-rendering="crispEdges"/>
<rect x="359" y="118" width="3" height="3" fill="#000" shape-rendering="crispEdges"/>
<rect x="412" y="118" width="3" height="3" fill="#000" shape-rendering="crispEdges"/>
<rect x="37" y="172" width="3" height="3" fill="#000" shape-rendering="crispEdges"/>
<rect x="91" y="172" width="3" height="3" fill="#000" shape-rendering="crispEdges"/>
<rect x="144" y="172" width="3" height="3" fill="#000" shape-rendering="crispEdges"/>
<rect x="198" y="172" width="3" height="3" fill="#000" shape-rendering="crispEdges"/>
<rect x="251" y="172" width="3" height="3" fill="#000" shape-rendering="crispEdges"/>
<rect x="305" y="172" width="3" height="3" fill="#000" shape-rendering="crispEdges"/>
<rect x="359" y="172" width="3" height="3" fill="#000" shape-rendering="crispEdges"/>
<rect x="412" y="172" width="3" height="3" fill="#000" shape-rendering="crispEdges"/>
<rect x="37" y="225" width="3" height="3" fill="#000" shape-rendering="crispEdges"/>
<rect x="91" y="225" width="3" height="3" fill="#000" shape-rendering="crispEdges"/>
<rect x="144" y="225" width="3" height="3" fill="#000" shape-rendering="crispEdges"/>
<rect x="198" y="225" width="3" height="3" fill="#000" shape-rendering="crispEdges"/>
<rect x="251" y="225" width="3" height="3" fill="#000" shape-rendering="crispEdges"/>
<rect x="305" y="225" width="3" height="3" fill="#000" shape-rendering="crispEdges"/>
<rect x="359" y="225" width="3" height="3" fill="#000" shape-rendering="crispEdges"/>
<rect x="412" y="225" width="3" height="3" fill="#000" shape-rendering="crispEdges"/>
<rect x="37" y="279" width="3" height="3" fill="#000" shape-rendering="crispEdges"/>
<rect x="91" y="279" width="3" height="3" fill="#000" shape-rendering="crispEdges"/>
<rect x="144" y="279" width="3" height="3" fill="#000" shape-rendering="crispEdges"/>
<rect x="198" y="279" width="3" height="3" fill="#000" shape-rendering="crispEdges"/>
<rect x="251" y="279" width="3" height="3" fill="#000" shape-rendering="crispEdges"/>
<rect x="305" y="279" width="3" height="3" fill="#000" shape-rendering="crispEdges"/>
<rect x="359" y="279" width="3" height="3" fill="#000" shape-rendering="crispEdges"/>
<rect x="412" y="279" width="3" height="3" fill="#000" shape-rendering="crispEdges"/>
<rect x="37" y="333" width="3" height="3" fill="#000" shape-rendering="crispEdges"/>
<rect x="91" y="333" width="3" height="3" fill="#000" shape-rendering="crispEdges"/>
<rect x="144" y="333" width="3" height="3" fill="#000" shape-rendering="crispEdges"/>
<rect x="198" y="333" width="3" height="3" fill="#000" shape-rendering="crispEdges"/>
<rect x="251" y="333" width="3" height="3" fill="#000" shape-rendering="crispEdges"/>
<rect x="305" y="333" width="3" height="3" fill="#000" shape-rendering="crispEdges"/>
<rect x="359" y="333" width="3" height="3" fill="#000" shape-rendering="crispEdges"/>
<rect x="412" y="333" width="3" height="3" fill="#000" shape-rendering="crispEdges"/>
<rect x="37" y="386" width="3" height="3" fill="#000" shape-rendering="crispEdges"/>
<rect x="91" y="386" width="3" height="3" fill="#000" shape-rendering="crispEdges"/>
<rect x="144" y="386" width="3" height="3" fill="#000" shape-rendering="crispEdges"/>
<rect x="198" y="386" width="3" height="3" fill="#000" shape-rendering="crispEdges"/>
<rect x="251" y="386" width="3" height="3" fill="#000" shape-rendering="crispEdges"/>
<rect x="37" y="440" width="3" height="3" fill="#000" shape-rendering="crispEdges"/>
<rect x="91" y="440" width="3" height="3" fill="#000" shape-rendering="crispEdges"/>
<rect x="144" y="440" width="3" height="3" fill="#000" shape-rendering="crispEdges"/>
<rect x="198" y="440" width="3" height="3" fill="#000" shape-rendering="crispEdges"/>
<rect x="251" y="440" width="3" height="3" fill="#000" shape-rendering="crispEdges"/>
<rect x="305" y="440" width="3" height="3" fill="#000" shape-rendering="crispEdges"/>
<rect x="359" y="440" width="3" height="3" fill="#000" shape-rendering="crispEdges"/>
<rect x="412" y="440" width="3" height="3" fill="#000" shape-rendering="crispEdges"/>
</g>
<text class="sans" x="175" y="90.5" font-size="18.7" fill="#fff">S</text>
<text class="sans" x="62.5" y="174.5" font-size="17.5" fill="#fff">N</text>
<g class="sans" font-size="13.3" fill="#fff"><text x="10" y="406.5">Johnson Permanent Magnetic Motor</text><text x="10" y="422.5">Analysis by JL Naudin - 10/20/97</text><text x="10" y="438.5">Email : JNaudin509@aol.com</text></g>
<text class="sans" x="298" y="411" fill="#fff"><tspan font-size="15" font-weight="normal">All </tspan><tspan font-size="18.7">North poles</tspan></text>
<text class="sans" x="298" y="429" font-size="15.5" fill="#fff">oriented outward</text>
<g stroke="#ff2020" stroke-width="1" fill="none" shape-rendering="auto"><line x1="361.5" y1="390.4" x2="310" y2="351.7"/><line x1="310" y1="351.7" x2="325" y2="354"/><line x1="310" y1="351.7" x2="314.6" y2="362.3"/></g>
<!-- mini frame -->
<rect x="463" y="286" width="177" height="177" fill="#52aca0"/>
<rect x="463" y="286" width="176" height="1" fill="#00ffff"/>
<rect x="463" y="286" width="1" height="176" fill="#00ffff"/>
<rect x="466" y="289" width="170" height="1" fill="#0000a0"/>
<rect x="466" y="289" width="1" height="170" fill="#0000a0"/>
<rect x="467" y="290" width="169" height="169" fill="#6c7472"/>
<rect x="636" y="289" width="1" height="171" fill="#00ffff"/>
<rect x="466" y="459" width="171" height="1" fill="#00ffff"/>
<rect x="639" y="286" width="1" height="177" fill="#0000a0"/>
<rect x="463" y="462" width="177" height="1" fill="#0000a0"/>
<!-- green rect -->
<rect x="482.5" y="296.5" width="142" height="142" fill="none" stroke="#00f000" stroke-width="1"/>
<g fill="none" stroke="#f0f0f0" stroke-width="1" shape-rendering="auto"><polygon points="586.0,380.2 586.0,368.2 579.7,368.2 579.7,380.2"/><polygon points="584.4,362.1 578.4,351.7 573.0,354.9 578.9,365.2"/><polygon points="573.9,347.2 563.5,341.2 560.4,346.7 570.7,352.6"/><polygon points="557.4,339.6 545.4,339.6 545.4,345.9 557.4,345.9"/><polygon points="539.3,341.2 528.9,347.2 532.1,352.6 542.4,346.7"/><polygon points="524.4,351.7 518.4,362.1 523.9,365.2 529.8,354.9"/><polygon points="516.8,368.2 516.8,380.2 523.1,380.2 523.1,368.2"/><polygon points="518.4,386.3 524.4,396.7 529.8,393.5 523.9,383.2"/><polygon points="528.9,401.2 539.3,407.2 542.4,401.7 532.1,395.8"/><polygon points="545.4,408.8 557.4,408.8 557.4,402.5 545.4,402.5"/><polygon points="563.5,407.2 573.9,401.2 570.7,395.8 560.4,401.7"/><polygon points="578.4,396.7 584.4,386.3 578.9,383.2 573.0,393.5"/><polygon points="579.7,380.2 579.7,368.2 578.9,365.2 573.0,354.9 570.7,352.6 560.4,346.7 557.4,345.9 545.4,345.9 542.4,346.7 532.1,352.6 529.8,354.9 523.9,365.2 523.1,368.2 523.1,380.2 523.9,383.2 529.8,393.5 532.1,395.8 542.4,401.7 545.4,402.5 557.4,402.5 560.4,401.7 570.7,395.8 573.0,393.5 578.9,383.2"/><polygon points="574.3,374.2 571.2,362.8 562.8,354.4 551.4,351.3 540.0,354.4 531.6,362.8 528.5,374.2 531.6,385.6 540.0,394.0 551.4,397.1 562.8,394.0 571.2,385.6"/><polygon points="535.3,327.2 521.2,327.7 514.1,332.2 510.2,339.3 508.3,349.3 509.3,350.9 510.5,350.3 511.8,340.9 514.7,335.3 522.1,330.7 535.5,330.3 535.8,328.4"/></g>
<!-- legend -->
<rect x="470" y="35" width="163" height="215" fill="#000"/>
<rect x="471" y="36" width="161" height="213" fill="#f6f6f6"/>
<text class="mono" x="0" y="0" font-size="13.4" fill="#000" transform="translate(479 57) scale(1 1.12)">Flux Density</text>
<text class="mono" x="0" y="0" font-size="13.4" fill="#000" transform="translate(479 73) scale(1 1.12)">B (T)</text>
<g id="bar">
<rect x="487" y="93" width="33" height="143" fill="#000"/>
<rect x="488" y="94" width="31" height="5" fill="url(#dCrim)"/>
<rect x="488" y="100" width="31" height="12" fill="#ff0000"/>
<rect x="488" y="113" width="31" height="12" fill="url(#dOrg)"/>
<rect x="488" y="126" width="31" height="12" fill="#ffff00"/>
<rect x="488" y="139" width="31" height="12" fill="#00ff00"/>
<rect x="488" y="152" width="31" height="12" fill="url(#dMg)"/>
<rect x="488" y="165" width="31" height="12" fill="url(#dLg)"/>
<rect x="488" y="178" width="31" height="12" fill="#00ffff"/>
<rect x="488" y="191" width="31" height="12" fill="url(#dBl)"/>
<rect x="488" y="204" width="31" height="12" fill="#0000ff"/>
<rect x="488" y="217" width="31" height="12" fill="#0000a8"/>
<rect x="488" y="230" width="31" height="5" fill="url(#dPur)"/>
<text class="mono" x="535" y="0" font-size="13.4" fill="#000" transform="translate(0 103) scale(1 0.8)">0.50</text>
<text class="mono" x="535" y="0" font-size="13.4" fill="#000" transform="translate(0 116) scale(1 0.8)">0.45</text>
<text class="mono" x="535" y="0" font-size="13.4" fill="#000" transform="translate(0 129) scale(1 0.8)">0.40</text>
<text class="mono" x="535" y="0" font-size="13.4" fill="#000" transform="translate(0 142) scale(1 0.8)">0.35</text>
<text class="mono" x="535" y="0" font-size="13.4" fill="#000" transform="translate(0 155) scale(1 0.8)">0.30</text>
<text class="mono" x="535" y="0" font-size="13.4" fill="#000" transform="translate(0 168) scale(1 0.8)">0.25</text>
<text class="mono" x="535" y="0" font-size="13.4" fill="#000" transform="translate(0 181) scale(1 0.8)">0.20</text>
<text class="mono" x="535" y="0" font-size="13.4" fill="#000" transform="translate(0 194) scale(1 0.8)">0.15</text>
<text class="mono" x="535" y="0" font-size="13.4" fill="#000" transform="translate(0 207) scale(1 0.8)">0.10</text>
<text class="mono" x="535" y="0" font-size="13.4" fill="#000" transform="translate(0 220) scale(1 0.8)">0.05</text>
<text class="mono" x="535" y="0" font-size="13.4" fill="#000" transform="translate(0 233) scale(1 0.8)">0.00</text>
</g>
<!-- status text -->
<text class="mono" x="0" y="0" font-size="13.4" fill="#000" transform="translate(8 475) scale(1 1.1)">Press any key to continue</text>
</svg>
</body></html>
